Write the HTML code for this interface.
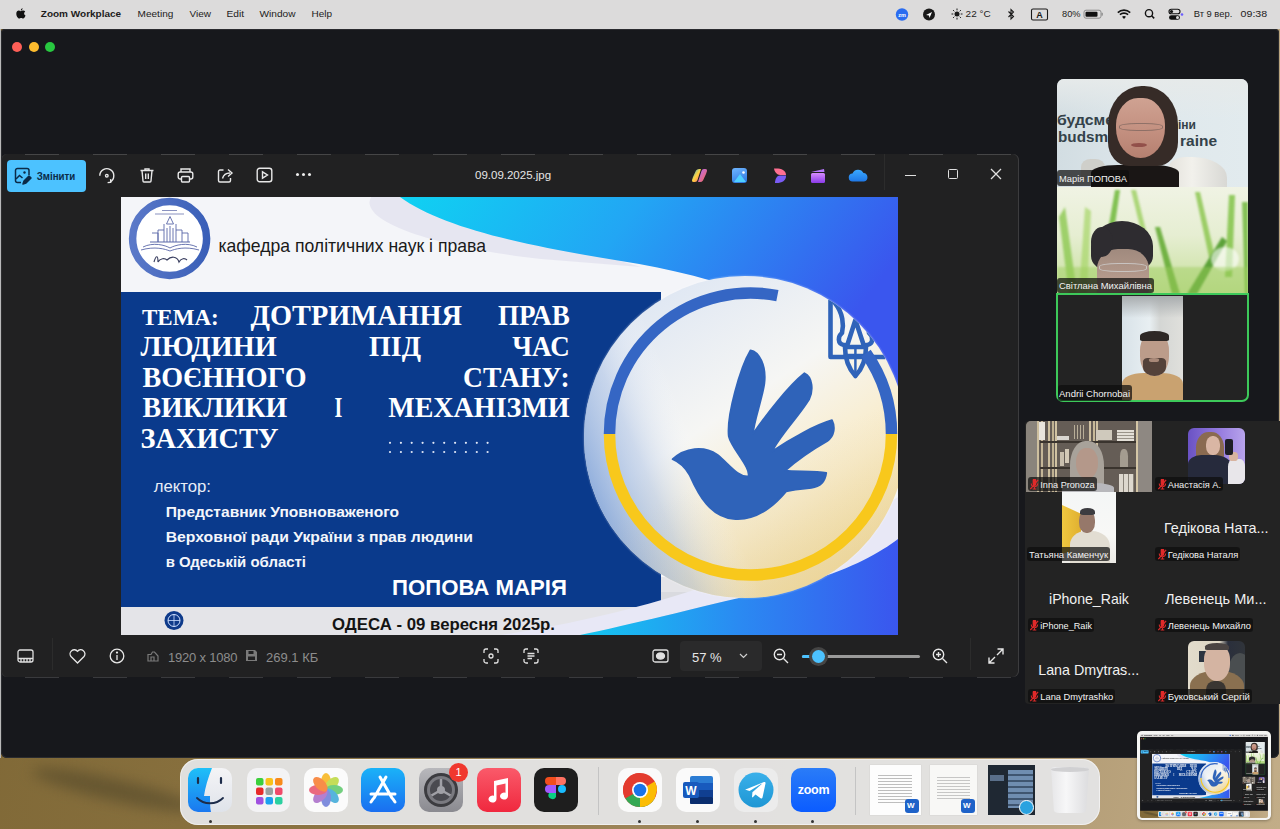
<!DOCTYPE html>
<html><head><meta charset="utf-8">
<style>
*{margin:0;padding:0;box-sizing:border-box}
html,body{width:1280px;height:829px;overflow:hidden;font-family:"Liberation Sans",sans-serif}
body{position:relative;background:linear-gradient(100deg,#7d6634 0%,#8a7240 30%,#a89068 70%,#c2ad88 100%)}
.a{position:absolute}
/* menubar */
#menubar,.cmenubar{left:0;top:0;width:1280px;height:29px;background:#dcdbdb;color:#1d1d1d;font-size:11.5px}
#menubar span,.cmenubar span{position:absolute;top:7px;white-space:nowrap}
/* zoom window */
#zw,.czw{left:1px;top:29px;width:1278px;height:729px;background:#17181c;border-radius:4px 4px 6px 6px;overflow:hidden;box-shadow:inset 0 0 0 1px #2a2b2f}
.tl{position:absolute;width:10px;height:10px;border-radius:50%;top:13px}
/* photos window */
#pw,.cpw{left:1px;top:154px;width:1018px;height:523px;background:#212122;border-radius:6px;overflow:hidden;box-shadow:inset -1px 0 0 #3c3c3e,inset 1px 0 0 #2e2e30}
.bn{color:#f0f0f0;font-size:15.5px;text-align:center;white-space:nowrap}
</style></head>
<body>
<!--SCREEN--><div class="a" style="left:0;top:0;width:1280px;height:829px;overflow:hidden;background:linear-gradient(100deg,#7d6634 0%,#8a7240 30%,#a89068 70%,#c2ad88 100%)">
<div class="a" style="left:0;top:757px;width:180px;height:72px;overflow:hidden"><div class="a" style="left:30px;top:22px;width:170px;height:22px;border-radius:50%;background:rgba(72,64,38,.5);filter:blur(7px);transform:rotate(13deg)"></div></div>
<!-- MENU BAR -->
<div id="menubar" class="a"><svg class="a" style="left:0;top:0" width="1280" height="29" viewBox="0 0 1280 29">
<path d="M20.6,11.2 c0.9,0 1.9,-0.7 2.6,-0.7 c0.8,0 1.5,0.4 2,1 c-1.6,0.9 -1.4,3.4 0.3,4.1 c-0.4,1.2 -1.3,3 -2.4,3 c-0.8,0 -1,-0.5 -1.9,-0.5 c-0.9,0 -1.2,0.5 -2,0.5 c-1.3,0 -2.9,-2.6 -2.9,-4.8 c0,-2.2 1.3,-3.3 2.5,-3.3 c0.7,0 1.3,0.6 1.8,0.7z M20.7,10.6 c-0.1,-1 0.7,-2.2 1.9,-2.4 c0.1,1.1 -0.8,2.3 -1.9,2.4z" fill="#111"/>
<circle cx="902" cy="14.5" r="6.2" fill="#2a6cf0"/><text x="902" y="16.6" font-family="Liberation Sans" font-size="5.5" font-weight="bold" fill="#fff" text-anchor="middle">zm</text>
<circle cx="929" cy="14.5" r="6" fill="#1a1a1a"/><path d="M926,15 L932,12 L929.5,18 L929,15.5Z" fill="#fff"/>
<circle cx="957" cy="14" r="2.5" fill="#1a1a1a"/><g stroke="#1a1a1a" stroke-width="1"><path d="M957,8.5v1.8M957,17.7v1.8M951.5,14h1.8M960.7,14h1.8M953.1,10.1l1.2,1.2M959.7,16.7l1.2,1.2M953.1,17.9l1.2,-1.2M959.7,11.3l1.2,-1.2"/></g>
<path d="M1008.5,11.5 L1013.5,16.5 L1011,19 V9.5 L1013.5,12 L1008.5,17" fill="none" stroke="#1a1a1a" stroke-width="1.1"/>
<rect x="1031.5" y="9" width="16" height="11" rx="1.5" fill="none" stroke="#1a1a1a" stroke-width="1.1"/><text x="1039.5" y="17.8" font-family="Liberation Sans" font-size="9" font-weight="bold" fill="#1a1a1a" text-anchor="middle">A</text>
<rect x="1084" y="10.2" width="17" height="8" rx="2" fill="none" stroke="#8a8a8a" stroke-width="1"/><rect x="1085.5" y="11.7" width="12" height="5" rx="1" fill="#111"/><rect x="1101.5" y="12.8" width="1.3" height="2.8" fill="#8a8a8a"/>
<path d="M1117.8,12.6 a9,9 0 0 1 12.4,0" fill="none" stroke="#111" stroke-width="1.6"/><path d="M1119.9,14.7 a6,6 0 0 1 8.2,0" fill="none" stroke="#111" stroke-width="1.6"/><path d="M1122,16.8 a3,3 0 0 1 4,0 L1124,19Z" fill="#111"/>
<circle cx="1149" cy="13.2" r="3.6" fill="none" stroke="#111" stroke-width="1.4"/><path d="M1151.6,15.8 l2.6,2.6" stroke="#111" stroke-width="1.5"/>
<rect x="1169" y="9.2" width="11" height="4.6" rx="2.3" fill="none" stroke="#111" stroke-width="1.1"/><circle cx="1171.5" cy="11.5" r="1.6" fill="#111"/><rect x="1169" y="15.2" width="11" height="4.6" rx="2.3" fill="#111"/><circle cx="1177.5" cy="17.5" r="1.5" fill="#ddd"/><circle cx="1182" cy="14.5" r="1.3" fill="#6a5cff"/>
<text x="40.8" y="17.3" textLength="80.4" lengthAdjust="spacingAndGlyphs" font-family="Liberation Sans" font-size="9.8" font-weight="bold" fill="#1c1c1c">Zoom Workplace</text><text x="137.6" y="17.3" textLength="35.7" lengthAdjust="spacingAndGlyphs" font-family="Liberation Sans" font-size="9.8" font-weight="normal" fill="#1c1c1c">Meeting</text><text x="189.5" y="17.3" textLength="21.5" lengthAdjust="spacingAndGlyphs" font-family="Liberation Sans" font-size="9.8" font-weight="normal" fill="#1c1c1c">View</text><text x="226.5" y="17.3" textLength="17.5" lengthAdjust="spacingAndGlyphs" font-family="Liberation Sans" font-size="9.8" font-weight="normal" fill="#1c1c1c">Edit</text><text x="259.5" y="17.3" textLength="36.0" lengthAdjust="spacingAndGlyphs" font-family="Liberation Sans" font-size="9.8" font-weight="normal" fill="#1c1c1c">Window</text><text x="311.5" y="17.3" textLength="20.5" lengthAdjust="spacingAndGlyphs" font-family="Liberation Sans" font-size="9.8" font-weight="normal" fill="#1c1c1c">Help</text><text x="965.6" y="17.3" textLength="25.0" lengthAdjust="spacingAndGlyphs" font-family="Liberation Sans" font-size="9.8" font-weight="normal" fill="#1c1c1c">22 °C</text><text x="1062" y="17.3" textLength="18.5" lengthAdjust="spacingAndGlyphs" font-family="Liberation Sans" font-size="9.5" font-weight="normal" fill="#1c1c1c">80%</text><text x="1193.7" y="17.3" textLength="38.6" lengthAdjust="spacingAndGlyphs" font-family="Liberation Sans" font-size="9.8" font-weight="normal" fill="#1c1c1c">Вт 9 вер.</text><text x="1240.6" y="17.3" textLength="26.6" lengthAdjust="spacingAndGlyphs" font-family="Liberation Sans" font-size="9.8" font-weight="normal" fill="#1c1c1c">09:38</text></svg></div>

<div class="a" style="left:0;top:29px;width:1px;height:729px;background:#b9b9b9"></div>
<!-- ZOOM WINDOW -->
<div id="zw" class="a">
  <div class="tl" style="left:11px;background:#fe5f57"></div>
  <div class="tl" style="left:28px;background:#febc2e"></div>
  <div class="tl" style="left:44px;background:#28c840"></div>
</div>

<!-- PHOTOS WINDOW -->
<div id="pw" class="a">
  <!-- top toolbar -->
  <div class="a" style="left:6px;top:6px;width:79px;height:32px;background:#4cc2ff;border-radius:4px"></div>
  <svg class="a" style="left:13px;top:13px" width="18" height="18" viewBox="0 0 18 18" fill="none" stroke="#0b2b48" stroke-width="1.5"><path d="M7,15.5 H3.5 A2,2 0 0 1 1.5,13.5 V3.5 A2,2 0 0 1 3.5,1.5 H13 A2,2 0 0 1 15,3.5 V8"/><circle cx="10.5" cy="5.5" r="1.2" fill="#0b2b48" stroke="none"/><path d="M2,12 L5.5,8.5 L8.5,11"/><path d="M9,17 L10,14 L15,9 L17,11 L12,16 Z" fill="#0b2b48" stroke-linejoin="round"/></svg>
  <svg class="a" style="left:0;top:0;overflow:visible" width="1" height="1"><text x="35.7" y="26" textLength="38.6" lengthAdjust="spacingAndGlyphs" font-family="Liberation Sans" font-weight="bold" font-size="11.5" fill="#0b2b48">Змінити</text></svg>
  <svg class="a" style="left:97px;top:13px" width="18" height="18" viewBox="0 0 18 18" fill="none" stroke="#e8e8e8" stroke-width="1.4"><path d="M1.8,8.7 A7,7 0 1 1 12.3,14.8"/><path d="M9.6,15.6 L12.8,15.3 L12.6,12.1" stroke-linejoin="round"/><circle cx="8.8" cy="8.7" r="1.3"/></svg>
  <svg class="a" style="left:138px;top:13px" width="16" height="16" viewBox="0 0 16 16" fill="none" stroke="#e8e8e8" stroke-width="1.4"><path d="M1.5 3.5h13"/><path d="M6 3.5V2h4v1.5"/><path d="M3 3.5l1 10.5a1 1 0 0 0 1 1h6a1 1 0 0 0 1-1l1-10.5"/><path d="M6.7 6.5v5.5M9.3 6.5v5.5"/></svg>
  <svg class="a" style="left:176px;top:13px" width="17" height="16" viewBox="0 0 17 16" fill="none" stroke="#e8e8e8" stroke-width="1.4"><path d="M4 5V2h9v3"/><rect x="1.2" y="5" width="14.6" height="7" rx="2"/><rect x="4.5" y="9.5" width="8" height="5.5" rx="1" fill="#212122"/></svg>
  <svg class="a" style="left:216px;top:13px" width="17" height="16" viewBox="0 0 17 16" fill="none" stroke="#e8e8e8" stroke-width="1.4"><path d="M6.5 3H3a1.5 1.5 0 0 0-1.5 1.5v9A1.5 1.5 0 0 0 3 15h9a1.5 1.5 0 0 0 1.5-1.5V11"/><path d="M5.5 11.5c1-4 4-5.5 7.5-5.5"/><path d="M11 2.5l4 3.5-4 3.5"/></svg>
  <svg class="a" style="left:255px;top:13px" width="17" height="16" viewBox="0 0 17 16" fill="none" stroke="#e8e8e8" stroke-width="1.4"><rect x="1.2" y="1.2" width="14.6" height="13.6" rx="2.5"/><path d="M6.5 4.8v6.4l5-3.2z"/></svg>
  <div class="a" style="left:295px;top:19px;width:3px;height:3px;border-radius:50%;background:#eee;box-shadow:6px 0 0 #eee,12px 0 0 #eee"></div>
  <div class="a" style="left:474px;top:15px;font-size:11.5px;color:#e6e6e6;white-space:nowrap">09.09.2025.jpg</div>
  <!-- app icons -->
  <svg class="a" style="left:690px;top:14px" width="17" height="15" viewBox="0 0 17 15"><defs><linearGradient id="cp1" x1="0" y1="0" x2="1" y2="1"><stop offset="0" stop-color="#1fb0ff"/><stop offset=".5" stop-color="#ffd23c"/><stop offset="1" stop-color="#ff5a7a"/></linearGradient><linearGradient id="cp2" x1="0" y1="0" x2="1" y2="1"><stop offset="0" stop-color="#b06bff"/><stop offset="1" stop-color="#ff6a4a"/></linearGradient></defs><path d="M2 9L5 2.5Q6 1 8 1h2L6.5 12Q6 14 4 14H2.5Q0.5 14 1 12z" fill="url(#cp1)"/><path d="M15 6l-3 6.5Q11 14 9 14H7L10.5 3Q11 1 13 1h1.5Q16.5 1 16 3z" fill="url(#cp2)"/></svg>
  <div class="a" style="left:731px;top:14px;width:15px;height:15px;border-radius:3px;background:linear-gradient(160deg,#6fb6ff,#2a74e0)"></div>
  <svg class="a" style="left:733px;top:16px" width="12" height="12" viewBox="0 0 12 12"><circle cx="9.5" cy="2.5" r="1.3" fill="#fff"/><path d="M0 12L6 4l6 8z" fill="#4fd0ff"/></svg>
  <svg class="a" style="left:771px;top:13px" width="15" height="17" viewBox="0 0 15 17"><path d="M2,1.5 C8,1 14,2.5 14,8 H8 C5,8 2.5,5 2,1.5Z" fill="#ff6f91"/><path d="M3,16 C9,16.5 14.5,14 14,8.5 H8 C5,8.5 3,12 3,16Z" fill="#7a5cf5"/></svg>
  <svg class="a" style="left:809px;top:13px" width="16" height="17" viewBox="0 0 16 17"><defs><linearGradient id="cc" x1="0" y1="0" x2="0" y2="1"><stop offset="0" stop-color="#d68cff"/><stop offset="1" stop-color="#8a3ae8"/></linearGradient></defs><path d="M1 5l13-3 .5 3z" fill="#b878ff"/><rect x="1" y="6" width="14" height="10" rx="1.5" fill="url(#cc)"/></svg>
  <svg class="a" style="left:847px;top:14px" width="20" height="14" viewBox="0 0 20 14"><defs><linearGradient id="od" x1="0" y1="0" x2="0" y2="1"><stop offset="0" stop-color="#3aa9ff"/><stop offset="1" stop-color="#1f78e6"/></linearGradient></defs><path d="M5 13.5A4 4 0 0 1 4.5 5.5 6 6 0 0 1 15.5 5 4.3 4.3 0 0 1 16 13.5z" fill="url(#od)"/></svg>
  <div class="a" style="left:883px;top:0;width:1px;height:36px;background:#2c2c2c"></div>
  <div class="a" style="left:904px;top:21px;width:11px;height:1.3px;background:#e0e0e0"></div>
  <div class="a" style="left:947px;top:15px;width:10px;height:10px;border:1.3px solid #e0e0e0;border-radius:1.5px"></div>
  <svg class="a" style="left:989px;top:14px" width="12" height="12" viewBox="0 0 12 12" stroke="#e0e0e0" stroke-width="1.3"><path d="M1 1l10 10M11 1L1 11"/></svg>

  <!-- IMAGE -->
  <div id="img" class="a" style="left:120px;top:43px;width:777px;height:438px;overflow:hidden;background:#f3f4f8"><svg class="a" style="left:0;top:0" width="777" height="438" viewBox="0 0 777 438">
<defs>
 <linearGradient id="sw" x1="0" y1="0" x2="1" y2="0.3"><stop offset="0" stop-color="#0fd2f2"/><stop offset="0.45" stop-color="#22a6f4"/><stop offset="1" stop-color="#3a56ee"/></linearGradient>
 <linearGradient id="sw2" x1="0" y1="0" x2="1" y2="0"><stop offset="0" stop-color="#14c8f0"/><stop offset="0.5" stop-color="#2a8af2"/><stop offset="1" stop-color="#3a56ee"/></linearGradient>
 <linearGradient id="cf" x1="0.15" y1="0.1" x2="0.75" y2="1"><stop offset="0" stop-color="#dfe7f3"/><stop offset="0.4" stop-color="#f6f6f4"/><stop offset="0.72" stop-color="#f9ebc6"/><stop offset="1" stop-color="#f8dc90"/></linearGradient>
 <radialGradient id="halo" cx="0.5" cy="0.5" r="0.5"><stop offset="0.93" stop-color="#ffffff"/><stop offset="1" stop-color="#ffffff" stop-opacity="0"/></radialGradient>
 <linearGradient id="shade" x1="0" y1="0.62" x2="0.75" y2="0.3"><stop offset="0" stop-color="#7fa2d8" stop-opacity="0.85"/><stop offset="0.22" stop-color="#a8bfe4" stop-opacity="0.5"/><stop offset="0.45" stop-color="#ffffff" stop-opacity="0"/></linearGradient>
 <linearGradient id="shade2" x1="0.2" y1="0.3" x2="0.5" y2="1"><stop offset="0.5" stop-color="#c8c0b0" stop-opacity="0"/><stop offset="1" stop-color="#c8bca0" stop-opacity="0.25"/></linearGradient>
 <clipPath id="circclip"><circle cx="624" cy="240" r="161"/></clipPath>
 <linearGradient id="lg" x1="0" y1="0" x2="1" y2="0"><stop offset="0" stop-color="#5a78c8"/><stop offset="1" stop-color="#3a5fb8"/></linearGradient>
</defs>
<rect width="777" height="438" fill="#f4f5f9"/>
<path d="M250,0 C238,22 300,48 420,62 L520,70 L279,0 Z" fill="#e6e6f1"/>
<path d="M279,0 C320,30 400,48 500,64 C600,80 700,110 777,200 L777,0 Z" fill="url(#sw)"/>
<path d="M0,95 H540 V410 H0 Z" fill="#0a3a8c"/>
<path d="M0,410 H540 V380 L600,380 L620,438 H0 Z" fill="#e4e4e8"/>
<path d="M540,395 L600,395 L600,425 L540,425 Z" fill="#d9dadf"/>
<path d="M380,438 C500,420 650,380 777,300 L777,342 C760,355 730,372 691,383 C600,405 520,425 459,438 Z" fill="#e8e8f6"/>
<path d="M459,438 C520,425 600,405 691,383 C730,372 760,355 777,342 L777,438 Z" fill="url(#sw2)"/>
<circle cx="624" cy="240" r="163" fill="url(#halo)"/>
<circle cx="624" cy="240" r="161" fill="url(#cf)"/>
<circle cx="624" cy="240" r="161" fill="url(#shade)"/>
<circle cx="624" cy="240" r="161" fill="url(#shade2)"/>
<g clip-path="url(#circclip)">
<g fill="none" stroke="#2f63b9" stroke-width="4.6" stroke-linejoin="round" stroke-linecap="square">
 <path d="M709.5,105 V160 H762"/>
 <path d="M714,106 C722,116 723,128 721,136 C717,139 716,147 723,148"/>
 <path d="M755,106 C747,116 746,128 748,136 C752,139 753,147 746,148"/>
 <path d="M726,149 L734.4,123 L743,149"/>
 <path d="M724,150 C724,164 728,172 734.4,179 C741,172 745,164 745,150 Z"/>
 <path d="M724,158 H745 M734.4,150 V179" stroke-width="2.5"/>
</g>
</g>
<path d="M488.5,237.0 A141,141 0 0 1 656.4,98.6" fill="none" stroke="#3566c4" stroke-width="11.5"/>
<path d="M745.0,156.1 A141,141 0 0 1 770.5,237.0" fill="none" stroke="#3566c4" stroke-width="11.5"/>
<path d="M770.5,237.0 A141,141 0 0 1 488.5,237.0" fill="none" stroke="#f8c81c" stroke-width="11.5"/>
<g transform="translate(539,143) scale(0.2293)"><path d="M55,520 C110,470 190,460 250,500 C300,540 340,600 385,595 C400,560 310,470 300,420 C290,330 350,120 395,45 C430,50 465,110 455,190 C445,260 410,350 405,410 C460,330 560,200 630,145 C665,160 670,220 650,260 C600,340 520,420 490,485 C570,430 680,370 750,350 C765,380 760,420 730,440 C660,480 590,530 545,570 C600,575 680,570 725,580 C720,620 700,640 660,645 C610,650 570,655 550,660 C500,720 420,790 320,780 C220,770 170,680 130,590 C110,555 80,530 55,520 Z" fill="#2f63b9" stroke="#2f63b9" stroke-width="8" stroke-linejoin="round"/></g>
<!-- logo -->
<circle cx="48.6" cy="41.5" r="37" fill="#fff" stroke="url(#lg)" stroke-width="7.5"/>
<g fill="none" stroke="#5a68a8" stroke-width="0.9">
 <path d="M41,13.5 H56 M34,17 H63" stroke="#8a92c0" stroke-width="1.1"/>
 <path d="M49,19.5 L45.5,27 H52.5 Z"/>
 <path d="M43,27 V45 M55,27 V45 M46,31 v14 M49,29 v16 M52,31 v14"/>
 <path d="M37,33 H43 M55,33 H61 M31,36 H37 V45 M61,36 H67 V45 M37,33 V45 M61,33 V45"/>
 <path d="M29,45 H69" stroke-width="1.2"/>
 <path d="M22,50 C32,45 44,48 49,51 C54,48 66,45 76,50 M20,53 C34,49 44,52 49,54 C54,52 64,49 78,53"/>
 <path d="M33,65 C35,58 37,58 37,65 C39,61 44,61 46,63 C50,59 56,59 58,65 C60,61 64,61 66,63" stroke-width="1.2" stroke="#3a3f60"/>
</g>
<!-- globe -->
<circle cx="53" cy="423.5" r="9.5" fill="#0e3a8a"/>
<circle cx="53" cy="423.5" r="6" fill="none" stroke="#cfe0ff" stroke-width="1"/>
<path d="M47,423.5 H59 M53,417.5 V429.5" stroke="#cfe0ff" stroke-width="0.8"/>
<text x="21" y="128" textLength="76.8" lengthAdjust="spacingAndGlyphs" font-family="Liberation Serif" font-size="23" font-weight="bold" fill="#fff" >ТЕМА:</text><text x="129.6" y="128" textLength="211.4" lengthAdjust="spacingAndGlyphs" font-family="Liberation Serif" font-size="29" font-weight="bold" fill="#fff" >ДОТРИМАННЯ</text><text x="377" y="128" textLength="71.69999999999999" lengthAdjust="spacingAndGlyphs" font-family="Liberation Serif" font-size="29" font-weight="bold" fill="#fff" >ПРАВ</text><text x="19.6" y="158.5" textLength="136.1" lengthAdjust="spacingAndGlyphs" font-family="Liberation Serif" font-size="29" font-weight="bold" fill="#fff" >ЛЮДИНИ</text><text x="248" y="158.5" textLength="52" lengthAdjust="spacingAndGlyphs" font-family="Liberation Serif" font-size="29" font-weight="bold" fill="#fff" >ПІД</text><text x="391.3" y="158.5" textLength="57.39999999999998" lengthAdjust="spacingAndGlyphs" font-family="Liberation Serif" font-size="29" font-weight="bold" fill="#fff" >ЧАС</text><text x="21.5" y="189.5" textLength="164.1" lengthAdjust="spacingAndGlyphs" font-family="Liberation Serif" font-size="29" font-weight="bold" fill="#fff" >ВОЄННОГО</text><text x="342" y="189.5" textLength="106.69999999999999" lengthAdjust="spacingAndGlyphs" font-family="Liberation Serif" font-size="29" font-weight="bold" fill="#fff" >СТАНУ:</text><text x="21.5" y="220.3" textLength="144.8" lengthAdjust="spacingAndGlyphs" font-family="Liberation Serif" font-size="29" font-weight="bold" fill="#fff" >ВИКЛИКИ</text><text x="213.6" y="220.3" textLength="7.800000000000011" lengthAdjust="spacingAndGlyphs" font-family="Liberation Serif" font-size="29" font-weight="bold" fill="#fff" >І</text><text x="267.2" y="220.3" textLength="181.5" lengthAdjust="spacingAndGlyphs" font-family="Liberation Serif" font-size="29" font-weight="bold" fill="#fff" >МЕХАНІЗМИ</text><text x="19.6" y="250.5" textLength="138.0" lengthAdjust="spacingAndGlyphs" font-family="Liberation Serif" font-size="29" font-weight="bold" fill="#fff" >ЗАХИСТУ</text>
<circle cx="269.0" cy="245.8" r="1.1" fill="#dfe6f5"/><circle cx="279.9" cy="245.8" r="1.1" fill="#dfe6f5"/><circle cx="290.7" cy="245.8" r="1.1" fill="#dfe6f5"/><circle cx="301.6" cy="245.8" r="1.1" fill="#dfe6f5"/><circle cx="312.4" cy="245.8" r="1.1" fill="#dfe6f5"/><circle cx="323.2" cy="245.8" r="1.1" fill="#dfe6f5"/><circle cx="334.1" cy="245.8" r="1.1" fill="#dfe6f5"/><circle cx="344.9" cy="245.8" r="1.1" fill="#dfe6f5"/><circle cx="355.8" cy="245.8" r="1.1" fill="#dfe6f5"/><circle cx="366.6" cy="245.8" r="1.1" fill="#dfe6f5"/><circle cx="269.0" cy="255.0" r="1.1" fill="#dfe6f5"/><circle cx="279.9" cy="255.0" r="1.1" fill="#dfe6f5"/><circle cx="290.7" cy="255.0" r="1.1" fill="#dfe6f5"/><circle cx="301.6" cy="255.0" r="1.1" fill="#dfe6f5"/><circle cx="312.4" cy="255.0" r="1.1" fill="#dfe6f5"/><circle cx="323.2" cy="255.0" r="1.1" fill="#dfe6f5"/><circle cx="334.1" cy="255.0" r="1.1" fill="#dfe6f5"/><circle cx="344.9" cy="255.0" r="1.1" fill="#dfe6f5"/><circle cx="355.8" cy="255.0" r="1.1" fill="#dfe6f5"/><circle cx="366.6" cy="255.0" r="1.1" fill="#dfe6f5"/>
<text x="97.4" y="54.5" textLength="267.6" lengthAdjust="spacingAndGlyphs" font-family="Liberation Sans" font-size="19" font-weight="normal" fill="#1a1a1a" >кафедра політичних наук і права</text><text x="32.7" y="295" textLength="57.3" lengthAdjust="spacingAndGlyphs" font-family="Liberation Sans" font-size="16.5" font-weight="normal" fill="#e8edf7" >лектор:</text><text x="44.7" y="320" textLength="233.3" lengthAdjust="spacingAndGlyphs" font-family="Liberation Sans" font-size="15.5" font-weight="bold" fill="#f4f6fb" >Представник Уповноваженого</text><text x="44.7" y="345" textLength="307.3" lengthAdjust="spacingAndGlyphs" font-family="Liberation Sans" font-size="15.5" font-weight="bold" fill="#f4f6fb" >Верховної ради України  з прав людини</text><text x="44.7" y="370" textLength="140.3" lengthAdjust="spacingAndGlyphs" font-family="Liberation Sans" font-size="15.5" font-weight="bold" fill="#f4f6fb" >в Одеській області</text><text x="271" y="398" textLength="175" lengthAdjust="spacingAndGlyphs" font-family="Liberation Sans" font-size="22" font-weight="bold" fill="#fff" >ПОПОВА МАРІЯ</text><text x="211" y="432.5" textLength="223" lengthAdjust="spacingAndGlyphs" font-family="Liberation Sans" font-size="16.5" font-weight="bold" fill="#141414" >ОДЕСА - 09 вересня 2025р.</text>
</svg></div>

  <!-- bottom bar -->
  <svg class="a" style="left:16px;top:495px" width="17" height="14" viewBox="0 0 17 14" fill="none" stroke="#e0e0e0" stroke-width="1.3"><rect x="1" y="1" width="15" height="12" rx="2"/><path d="M1 9.5h15M4 9.5v3.5M7 9.5v3.5M10 9.5v3.5M13 9.5v3.5"/></svg>
  <div class="a" style="left:51px;top:484px;width:1px;height:32px;background:#2c2c2c"></div>
  <svg class="a" style="left:68px;top:495px" width="17" height="15" viewBox="0 0 17 15" fill="none" stroke="#e6e6e6" stroke-width="1.3"><path d="M8.5 14L2 7.5A3.8 3.8 0 0 1 8.5 2.3 3.8 3.8 0 0 1 15 7.5z"/></svg>
  <svg class="a" style="left:108px;top:494px" width="16" height="16" viewBox="0 0 16 16" fill="none" stroke="#e6e6e6" stroke-width="1.3"><circle cx="8" cy="8" r="6.8"/><path d="M8 7v5"/><circle cx="8" cy="4.6" r=".5" fill="#e6e6e6"/></svg>
  <svg class="a" style="left:145px;top:496px" width="13" height="12" viewBox="0 0 13 12" fill="none" stroke="#7a7a7a" stroke-width="1.2"><path d="M2 11V4.5h3l1.5-2.5h2L12 6v5z"/><path d="M5 11V7h3v4"/></svg>
  <div class="a" style="left:167px;top:496px;font-size:13px;color:#8d8d8d;white-space:nowrap;letter-spacing:-0.2px">1920 x 1080</div>
  <svg class="a" style="left:245px;top:496px" width="11" height="11" viewBox="0 0 11 11"><path d="M0 0h9l2 2v9H0z" fill="#7a7a7a"/><rect x="2.5" y="1" width="5" height="3" fill="#212122"/><rect x="2" y="6.5" width="7" height="3.5" fill="#212122"/></svg>
  <div class="a" style="left:265px;top:496px;font-size:13px;color:#8d8d8d;white-space:nowrap">269.1 КБ</div>
  <svg class="a" style="left:482px;top:494px" width="16" height="16" viewBox="0 0 16 16" fill="none" stroke="#e0e0e0" stroke-width="1.3"><path d="M1 5V3a2 2 0 0 1 2-2h2M11 1h2a2 2 0 0 1 2 2v2M15 11v2a2 2 0 0 1-2 2h-2M5 15H3a2 2 0 0 1-2-2v-2"/><circle cx="8" cy="8" r="2"/></svg>
  <svg class="a" style="left:522px;top:494px" width="16" height="16" viewBox="0 0 16 16" fill="none" stroke="#e0e0e0" stroke-width="1.3"><path d="M1 5V3a2 2 0 0 1 2-2h2M11 1h2a2 2 0 0 1 2 2v2M15 11v2a2 2 0 0 1-2 2h-2M5 15H3a2 2 0 0 1-2-2v-2"/><path d="M4.5 5.5h7M4.5 8h7M4.5 10.5h4.5"/></svg>
  <svg class="a" style="left:651px;top:495px" width="17" height="14" viewBox="0 0 17 14" fill="none" stroke="#e0e0e0" stroke-width="1.3"><rect x="1" y="1" width="15" height="12" rx="2"/><ellipse cx="8.5" cy="7" rx="4" ry="3" fill="#e0e0e0"/></svg>
  <div class="a" style="left:679px;top:487px;width:82px;height:30px;border-radius:4px;background:#2a2a2b"></div>
  <div class="a" style="left:691px;top:496px;font-size:13px;color:#e6e6e6;white-space:nowrap">57 %</div>
  <svg class="a" style="left:738px;top:499px" width="9" height="6" viewBox="0 0 9 6" fill="none" stroke="#cfcfcf" stroke-width="1.2"><path d="M1 1l3.5 3.5L8 1"/></svg>
  <svg class="a" style="left:772px;top:494px" width="16" height="16" viewBox="0 0 16 16" fill="none" stroke="#e6e6e6" stroke-width="1.4"><circle cx="6.5" cy="6.5" r="5.2"/><path d="M10.5 10.5L15 15M4 6.5h5"/></svg>
  <div class="a" style="left:801px;top:501px;width:118px;height:3px;border-radius:2px;background:#9a9a9a"></div>
  <div class="a" style="left:801px;top:501px;width:15px;height:3px;border-radius:2px;background:#4cc2ff"></div>
  <div class="a" style="left:808px;top:493px;width:19px;height:19px;border-radius:50%;background:#454545"></div>
  <div class="a" style="left:811px;top:496px;width:13px;height:13px;border-radius:50%;background:#4cc2ff"></div>
  <svg class="a" style="left:931px;top:494px" width="16" height="16" viewBox="0 0 16 16" fill="none" stroke="#e6e6e6" stroke-width="1.4"><circle cx="6.5" cy="6.5" r="5.2"/><path d="M10.5 10.5L15 15M4 6.5h5M6.5 4v5"/></svg>
  <div class="a" style="left:969px;top:484px;width:1px;height:32px;background:#2c2c2c"></div>
  <svg class="a" style="left:987px;top:494px" width="16" height="16" viewBox="0 0 16 16" fill="none" stroke="#e6e6e6" stroke-width="1.4"><path d="M9.5 1H15v5.5M15 1L9 7M6.5 15H1V9.5M1 15l6-6"/></svg>
</div>

<div class="a" style="left:1px;top:154px;width:1018px;height:1px;background:repeating-linear-gradient(90deg,transparent 0 24px,#8a8a8a 24px 58px,transparent 58px 68px);opacity:.35"></div>
<div class="a" style="left:1px;top:677px;width:1018px;height:1px;background:repeating-linear-gradient(90deg,transparent 0 24px,#8a8a8a 24px 58px,transparent 58px 68px);opacity:.3"></div>
<!--PARTS-->
<!-- TOP VIDEO TILES -->
<div class="a" style="left:1057px;top:79px;width:191px;height:108px;border-radius:7px 7px 0 0;overflow:hidden;background:linear-gradient(90deg,#d2dde2 0%,#dfe8ec 50%,#e2ebee 100%)">
  <div class="a" style="left:0;top:0;width:191px;height:40px;background:linear-gradient(180deg,#e6eaea,rgba(223,231,234,0))"></div>
  <svg class="a" style="left:0;top:0" width="191" height="108" viewBox="0 0 191 108" font-family="Liberation Sans" font-weight="bold" fill="#34424a">
   <text x="0" y="46" textLength="57" lengthAdjust="spacingAndGlyphs" font-size="15.5">будсме</text>
   <text x="121" y="50" textLength="18" lengthAdjust="spacingAndGlyphs" font-size="13">іни</text>
   <text x="1" y="63" textLength="50" lengthAdjust="spacingAndGlyphs" font-size="15.5">budsm</text>
   <text x="123" y="67" textLength="37" lengthAdjust="spacingAndGlyphs" font-size="14">raine</text>
  </svg>
  <div class="a" style="left:24px;top:80px;width:24px;height:20px;border-radius:40% 40% 0 0;background:#cfcfca"></div>
  <div class="a" style="left:112px;top:78px;width:58px;height:34px;border-radius:30% 60% 0 0;background:linear-gradient(90deg,#e4e2dc,#f2f1ec 40%,#d8d8d4)"></div>
  <div class="a" style="left:34px;top:86px;width:88px;height:26px;background:#1a1615;border-radius:30% 30% 0 0"></div>
  <div class="a" style="left:51px;top:7px;width:70px;height:80px;border-radius:48% 48% 30% 30%;background:#362b27"></div>
  <div class="a" style="left:59px;top:19px;width:49px;height:60px;border-radius:45% 45% 50% 50%;background:linear-gradient(180deg,#cfa292,#c28e7e 60%,#b58070)"></div>
  <div class="a" style="left:62px;top:44px;width:44px;height:8px;border:1px solid #6a5a55;border-radius:40%;opacity:.6"></div>
  <div class="a" style="left:74px;top:64px;width:16px;height:4px;border-radius:50%;background:#92504a"></div>
</div>
<div class="a" style="left:1057px;top:187px;width:191px;height:107px;overflow:hidden;background:linear-gradient(180deg,#f0f3e4 0%,#e6eed2 45%,#c6df9a 100%)">
  <svg class="a" style="left:0;top:0;filter:blur(0.8px)" width="191" height="107" viewBox="0 0 191 107">
   <path d="M2,30 L12,107 L20,107 L8,20Z" fill="#8cc850" opacity=".8"/>
   <path d="M28,20 L22,107 L30,107 L34,24Z" fill="#a6d668" opacity=".7"/>
   <path d="M58,3 L40,107 L48,107 L63,3Z" fill="#6fb83a" opacity=".85"/>
   <path d="M74,3 L88,60 L93,60 L79,3Z" fill="#9ccf60" opacity=".8"/>
   <path d="M98,40 L115,107 L123,107 L103,40Z" fill="#5fa82e" opacity=".85"/>
   <path d="M138,5 L152,70 L158,70 L143,5Z" fill="#88c44a" opacity=".8"/>
   <path d="M165,50 L130,107 L140,107 L170,54Z" fill="#4e9a2a" opacity=".9"/>
   <path d="M172,8 L168,90 L175,90 L178,8Z" fill="#7cc040" opacity=".8"/>
   <path d="M185,15 L188,107 L191,107 L191,15Z" fill="#6ab436" opacity=".8"/>
   <ellipse cx="168" cy="72" rx="14" ry="12" fill="#ffffff" opacity=".6"/>
   <rect x="0" y="80" width="191" height="27" fill="#9ccc5c" opacity=".45"/>
  </svg>
  <div class="a" style="left:34px;top:34px;width:62px;height:50px;border-radius:50% 50% 30% 30%;background:#2e2c30"></div>
  <div class="a" style="left:40px;top:62px;width:52px;height:50px;border-radius:40% 40% 20% 20%;background:linear-gradient(180deg,#a08a7e,#c3a596)"></div>
  <div class="a" style="left:42px;top:76px;width:48px;height:9px;border:1px solid #d0d0d0;border-radius:40%;opacity:.8"></div>
  <div class="a" style="left:34px;top:40px;width:22px;height:30px;border-radius:50%;background:#2e2c30"></div>
</div>
<div class="a" style="left:1056px;top:293px;width:193px;height:109px;border:2px solid #3dc95a;border-radius:0 0 7px 7px;background:#232323;overflow:hidden">
  <div class="a" style="left:64px;top:1px;width:61px;height:105px;background:linear-gradient(90deg,#d8e2e8 0%,#e8eff2 45%,#d4d6d4 62%,#e0e0dc 100%)"></div>
  <div class="a" style="left:64px;top:1px;width:61px;height:22px;background:linear-gradient(180deg,#a8acae,rgba(200,204,206,0))"></div>
  <div class="a" style="left:64px;top:78px;width:61px;height:30px;border-radius:35% 35% 0 0;background:#c9a270"></div>
  <div class="a" style="left:82px;top:37px;width:29px;height:44px;border-radius:42% 42% 45% 45%;background:#bc9c8a"></div>
  <div class="a" style="left:82px;top:36px;width:29px;height:10px;border-radius:50% 50% 15% 15%;background:#2e2826"></div>
  <div class="a" style="left:85px;top:63px;width:23px;height:18px;border-radius:20% 20% 50% 50%;background:#54423a"></div>
  <div class="a" style="left:91px;top:63px;width:10px;height:4px;border-radius:40%;background:#a88878"></div>
</div>
</div>
<!-- GALLERY -->
<div class="a" style="left:1025px;top:421px;width:255px;height:283px;background:#232323;border-radius:4px 0 0 4px"></div>
<!-- Inna -->
<div class="a" style="left:1026px;top:421px;width:126px;height:71px;overflow:hidden;border-radius:5px 0 0 0;background:#655d56">
  <div class="a" style="left:0;top:0;width:11px;height:71px;background:#8a847c"></div>
  <div class="a" style="left:112px;top:0;width:14px;height:71px;background:#8e8882"></div>
  <div class="a" style="left:11px;top:0;width:2px;height:71px;background:#cdbf9f;box-shadow:4px 0 0 #c4b698,11px 0 0 #cdbf9f,15px 0 0 #bfb192,18px 0 0 #d0c2a2,52px 0 0 #cdbf9f,56px 0 0 #c6b898,59px 0 0 #cdbf9f,99px 0 0 #d4c6a6"></div>
  <div class="a" style="left:13px;top:1px;width:6px;height:18px;background:#e8e4dc"></div>
  <div class="a" style="left:31px;top:15px;width:12px;height:4px;background:#d9d6d0"></div>
  <div class="a" style="left:48px;top:4px;width:12px;height:14px;background:repeating-linear-gradient(90deg,#b8ae98 0 1px,transparent 1px 3px)"></div>
  <div class="a" style="left:70px;top:9px;width:16px;height:10px;background:#cfc9bc"></div>
  <div class="a" style="left:91px;top:9px;width:17px;height:11px;background:repeating-linear-gradient(180deg,#e4e0d8 0 2px,#9a948a 2px 3px)"></div>
  <div class="a" style="left:14px;top:20px;width:96px;height:2px;background:#3a342e"></div>
  <div class="a" style="left:14px;top:46px;width:96px;height:2px;background:#3a342e"></div>
  <div class="a" style="left:34px;top:31px;width:4px;height:14px;background:#c9bfae;box-shadow:5px -3px 0 #d4cab8"></div>
  <div class="a" style="left:94px;top:28px;width:8px;height:18px;border-radius:40% 40% 0 0;background:#a49c90"></div>
  <div class="a" style="left:93px;top:53px;width:15px;height:18px;background:repeating-linear-gradient(90deg,#ddd8ce 0 4px,#8a847a 4px 5px)"></div>
  <div class="a" style="left:44px;top:20px;width:34px;height:54px;border-radius:45% 45% 20% 20%;background:#a8a29a"></div>
  <div class="a" style="left:50px;top:27px;width:22px;height:31px;border-radius:45% 45% 50% 50%;background:#b4988a"></div>
  <div class="a" style="left:36px;top:62px;width:52px;height:12px;border-radius:40% 40% 0 0;background:#b8b8bc"></div>
</div>
<!-- Anastasia -->
<div class="a" style="left:1188px;top:428px;width:57px;height:56px;border-radius:6px;overflow:hidden;background:linear-gradient(90deg,#6a52c4,#9a80e0 60%,#b8a4ec)">
  <div class="a" style="left:8px;top:4px;width:28px;height:34px;border-radius:45% 45% 30% 30%;background:#8a6a50"></div>
  <div class="a" style="left:18px;top:8px;width:14px;height:19px;border-radius:45%;background:#d9b6a4"></div>
  <div class="a" style="left:0;top:27px;width:44px;height:30px;border-radius:30% 40% 0 0;background:#262a3c"></div>
  <div class="a" style="left:40px;top:31px;width:17px;height:26px;border-radius:30% 30% 0 0;background:#e8e6ea"></div>
  <div class="a" style="left:41px;top:24px;width:9px;height:9px;border-radius:40%;background:#d8b4a0"></div>
  <div class="a" style="left:37px;top:11px;width:8px;height:16px;border-radius:2px;background:#1e1e26"></div>
</div>
<!-- Tatyana -->
<div class="a" style="left:1062px;top:492px;width:54px;height:71px;overflow:hidden;background:linear-gradient(180deg,#f4f6f6,#f8f8f6 60%,#ecebe6)">
  <div class="a" style="left:0;top:13px;width:19px;height:48px;background:linear-gradient(90deg,#f0c840,#e0b030);clip-path:polygon(0 0,100% 18%,100% 100%,0 100%)"></div>
  <div class="a" style="left:8px;top:39px;width:40px;height:34px;border-radius:40% 45% 0 0;background:#e2ddd2"></div>
  <div class="a" style="left:17px;top:18px;width:16px;height:23px;border-radius:45%;background:#96786a"></div>
  <div class="a" style="left:18px;top:16px;width:15px;height:7px;border-radius:50% 50% 20% 20%;background:#3c3c40"></div>
</div>
<!-- Bukovsky -->
<div class="a" style="left:1188px;top:641px;width:57px;height:60px;border-radius:6px;overflow:hidden;background:linear-gradient(90deg,#e2dccc 0%,#ddd6c4 55%,#2a2f3c 70%,#30343a 100%)">
  <div class="a" style="left:11px;top:10px;width:7px;height:11px;background:#2c3440"></div>
  <div class="a" style="left:40px;top:12px;width:24px;height:40px;border-radius:50%;background:#4a4e50"></div>
  <div class="a" style="left:2px;top:30px;width:54px;height:32px;border-radius:45% 45% 0 0;background:#8a7050"></div>
  <div class="a" style="left:18px;top:40px;width:20px;height:22px;border-radius:40% 40% 0 0;background:#3a3632"></div>
  <div class="a" style="left:16px;top:4px;width:26px;height:36px;border-radius:40% 40% 48% 48%;background:#d4b4a2"></div>
  <div class="a" style="left:17px;top:2px;width:24px;height:7px;border-radius:50% 50% 10% 10%;background:#4a4442"></div>
</div>
<!-- big names -->
<svg class="a" style="left:0;top:0;overflow:visible" width="1" height="1"><text x="1164" y="532.6" textLength="104.6" lengthAdjust="spacingAndGlyphs" font-family="Liberation Sans" font-size="15" fill="#f0f0f0">Гедікова Ната...</text></svg>
<svg class="a" style="left:0;top:0;overflow:visible" width="1" height="1"><text x="1049" y="603.9" textLength="79.9" lengthAdjust="spacingAndGlyphs" font-family="Liberation Sans" font-size="15" fill="#f0f0f0">iPhone_Raik</text></svg>
<svg class="a" style="left:0;top:0;overflow:visible" width="1" height="1"><text x="1165" y="603.9" textLength="101.5" lengthAdjust="spacingAndGlyphs" font-family="Liberation Sans" font-size="15" fill="#f0f0f0">Левенець Ми...</text></svg>
<svg class="a" style="left:0;top:0;overflow:visible" width="1" height="1"><text x="1038.2" y="674.9" textLength="101.0" lengthAdjust="spacingAndGlyphs" font-family="Liberation Sans" font-size="15" fill="#f0f0f0">Lana Dmytras...</text></svg>
<!-- LABELS -->
<div class="a" style="left:1057px;top:170px;width:72px;height:16px;background:rgba(14,14,14,0.72);border-radius:3px"></div><svg class="a" style="left:0;top:0;overflow:visible" width="1" height="1"><text x="1059" y="181.6" textLength="68.0" lengthAdjust="spacingAndGlyphs" font-family="Liberation Sans" font-size="9.6" fill="#f2f2f2" font-weight="500">Марія ПОПОВА</text></svg>
<div class="a" style="left:1057px;top:278px;width:97px;height:15px;background:rgba(14,14,14,0.72);border-radius:3px"></div><svg class="a" style="left:0;top:0;overflow:visible" width="1" height="1"><text x="1059" y="289.1" textLength="93.0" lengthAdjust="spacingAndGlyphs" font-family="Liberation Sans" font-size="9.6" fill="#f2f2f2" font-weight="500">Світлана Михайлівна</text></svg>
<div class="a" style="left:1058px;top:385px;width:74px;height:16px;background:rgba(14,14,14,0.72);border-radius:3px"></div><svg class="a" style="left:0;top:0;overflow:visible" width="1" height="1"><text x="1059" y="396.6" textLength="71.0" lengthAdjust="spacingAndGlyphs" font-family="Liberation Sans" font-size="9.6" fill="#f2f2f2" font-weight="500">Andrii Chornobai</text></svg>
<div class="a" style="left:1028px;top:477px;width:69px;height:14px;background:rgba(14,14,14,0.72);border-radius:3px"></div><svg class="a" style="left:1029.3px;top:479px" width="10" height="11" viewBox="0 0 10 12"><path d="M3.5,1.5 a2,2 0 0 1 4,0 v4 a2,2 0 0 1 -4,0z" fill="#e02a2a"/><path d="M2,5 a3.5,3.5 0 0 0 7,0 M5.5,9 v2 M3.5,11 h4" stroke="#e02a2a" stroke-width="1.1" fill="none"/><path d="M1,11 L9.5,1" stroke="#e02a2a" stroke-width="1.3"/></svg><svg class="a" style="left:0;top:0;overflow:visible" width="1" height="1"><text x="1040.3" y="487.6" textLength="54.4" lengthAdjust="spacingAndGlyphs" font-family="Liberation Sans" font-size="9.6" fill="#f2f2f2" font-weight="500">Inna Pronoza</text></svg>
<div class="a" style="left:1155px;top:477px;width:68px;height:14px;background:rgba(14,14,14,0.72);border-radius:3px"></div><svg class="a" style="left:1156.8px;top:479px" width="10" height="11" viewBox="0 0 10 12"><path d="M3.5,1.5 a2,2 0 0 1 4,0 v4 a2,2 0 0 1 -4,0z" fill="#e02a2a"/><path d="M2,5 a3.5,3.5 0 0 0 7,0 M5.5,9 v2 M3.5,11 h4" stroke="#e02a2a" stroke-width="1.1" fill="none"/><path d="M1,11 L9.5,1" stroke="#e02a2a" stroke-width="1.3"/></svg><svg class="a" style="left:0;top:0;overflow:visible" width="1" height="1"><text x="1167.8" y="487.6" textLength="53.2" lengthAdjust="spacingAndGlyphs" font-family="Liberation Sans" font-size="9.6" fill="#f2f2f2" font-weight="500">Анастасія А.</text></svg>
<div class="a" style="left:1027px;top:547px;width:83px;height:14px;background:rgba(14,14,14,0.72);border-radius:3px"></div><svg class="a" style="left:0;top:0;overflow:visible" width="1" height="1"><text x="1029" y="557.6" textLength="79.0" lengthAdjust="spacingAndGlyphs" font-family="Liberation Sans" font-size="9.6" fill="#f2f2f2" font-weight="500">Татьяна Каменчук</text></svg>
<div class="a" style="left:1155px;top:547px;width:85px;height:14px;background:rgba(14,14,14,0.72);border-radius:3px"></div><svg class="a" style="left:1156.8px;top:549px" width="10" height="11" viewBox="0 0 10 12"><path d="M3.5,1.5 a2,2 0 0 1 4,0 v4 a2,2 0 0 1 -4,0z" fill="#e02a2a"/><path d="M2,5 a3.5,3.5 0 0 0 7,0 M5.5,9 v2 M3.5,11 h4" stroke="#e02a2a" stroke-width="1.1" fill="none"/><path d="M1,11 L9.5,1" stroke="#e02a2a" stroke-width="1.3"/></svg><svg class="a" style="left:0;top:0;overflow:visible" width="1" height="1"><text x="1167.8" y="557.6" textLength="70.4" lengthAdjust="spacingAndGlyphs" font-family="Liberation Sans" font-size="9.6" fill="#f2f2f2" font-weight="500">Гедікова Наталя</text></svg>
<div class="a" style="left:1028px;top:618px;width:66px;height:14px;background:rgba(14,14,14,0.72);border-radius:3px"></div><svg class="a" style="left:1029.3px;top:620px" width="10" height="11" viewBox="0 0 10 12"><path d="M3.5,1.5 a2,2 0 0 1 4,0 v4 a2,2 0 0 1 -4,0z" fill="#e02a2a"/><path d="M2,5 a3.5,3.5 0 0 0 7,0 M5.5,9 v2 M3.5,11 h4" stroke="#e02a2a" stroke-width="1.1" fill="none"/><path d="M1,11 L9.5,1" stroke="#e02a2a" stroke-width="1.3"/></svg><svg class="a" style="left:0;top:0;overflow:visible" width="1" height="1"><text x="1040.3" y="628.6" textLength="51.7" lengthAdjust="spacingAndGlyphs" font-family="Liberation Sans" font-size="9.6" fill="#f2f2f2" font-weight="500">iPhone_Raik</text></svg>
<div class="a" style="left:1155px;top:618px;width:98px;height:14px;background:rgba(14,14,14,0.72);border-radius:3px"></div><svg class="a" style="left:1156.8px;top:620px" width="10" height="11" viewBox="0 0 10 12"><path d="M3.5,1.5 a2,2 0 0 1 4,0 v4 a2,2 0 0 1 -4,0z" fill="#e02a2a"/><path d="M2,5 a3.5,3.5 0 0 0 7,0 M5.5,9 v2 M3.5,11 h4" stroke="#e02a2a" stroke-width="1.1" fill="none"/><path d="M1,11 L9.5,1" stroke="#e02a2a" stroke-width="1.3"/></svg><svg class="a" style="left:0;top:0;overflow:visible" width="1" height="1"><text x="1167.8" y="628.6" textLength="83.2" lengthAdjust="spacingAndGlyphs" font-family="Liberation Sans" font-size="9.6" fill="#f2f2f2" font-weight="500">Левенець Михайло</text></svg>
<div class="a" style="left:1028px;top:689px;width:87px;height:14px;background:rgba(14,14,14,0.72);border-radius:3px"></div><svg class="a" style="left:1029.3px;top:691px" width="10" height="11" viewBox="0 0 10 12"><path d="M3.5,1.5 a2,2 0 0 1 4,0 v4 a2,2 0 0 1 -4,0z" fill="#e02a2a"/><path d="M2,5 a3.5,3.5 0 0 0 7,0 M5.5,9 v2 M3.5,11 h4" stroke="#e02a2a" stroke-width="1.1" fill="none"/><path d="M1,11 L9.5,1" stroke="#e02a2a" stroke-width="1.3"/></svg><svg class="a" style="left:0;top:0;overflow:visible" width="1" height="1"><text x="1040.3" y="699.6" textLength="73.0" lengthAdjust="spacingAndGlyphs" font-family="Liberation Sans" font-size="9.6" fill="#f2f2f2" font-weight="500">Lana Dmytrashko</text></svg>
<div class="a" style="left:1155px;top:689px;width:97px;height:14px;background:rgba(14,14,14,0.72);border-radius:3px"></div><svg class="a" style="left:1156.8px;top:691px" width="10" height="11" viewBox="0 0 10 12"><path d="M3.5,1.5 a2,2 0 0 1 4,0 v4 a2,2 0 0 1 -4,0z" fill="#e02a2a"/><path d="M2,5 a3.5,3.5 0 0 0 7,0 M5.5,9 v2 M3.5,11 h4" stroke="#e02a2a" stroke-width="1.1" fill="none"/><path d="M1,11 L9.5,1" stroke="#e02a2a" stroke-width="1.3"/></svg><svg class="a" style="left:0;top:0;overflow:visible" width="1" height="1"><text x="1167.8" y="699.6" textLength="82.2" lengthAdjust="spacingAndGlyphs" font-family="Liberation Sans" font-size="9.6" fill="#f2f2f2" font-weight="500">Буковський Сергій</text></svg>
<!-- DOCK -->
<div class="a" style="left:180px;top:759px;width:920px;height:66px;border-radius:18px;background:rgba(228,228,228,0.96);box-shadow:inset 0 0 0 1px rgba(255,255,255,0.5)"></div>
<!-- finder -->
<div class="a" style="left:188px;top:768px;width:44px;height:44px;border-radius:10px;overflow:hidden;background:linear-gradient(180deg,#f4f4f6,#dfe3ea)">
  <svg class="a" style="left:0;top:0" width="44" height="44" viewBox="0 0 44 44"><defs><linearGradient id="fb" x1="0" y1="0" x2="0" y2="1"><stop offset="0" stop-color="#1fc0f8"/><stop offset="1" stop-color="#1a78f0"/></linearGradient></defs><path d="M0,0 H24 C20,10 17,20 16,28 H22 C22,34 22,40 23,44 H0 Z" fill="url(#fb)"/><path d="M10,10 v5 M33,10 v5" stroke="#1d2c4a" stroke-width="2.2" stroke-linecap="round"/><path d="M9,30 C16,37 28,37 35,30" stroke="#1d2c4a" stroke-width="1.8" fill="none" stroke-linecap="round"/></svg>
</div>
<!-- launchpad -->
<div class="a" style="left:247px;top:768px;width:43px;height:44px;border-radius:10px;background:#f3f3f5">
  <svg class="a" style="left:0;top:0" width="43" height="44" viewBox="0 0 43 44">
   <rect x="9" y="10" width="7.5" height="7.5" rx="2" fill="#3ccf3c"/><rect x="18.5" y="10" width="7.5" height="7.5" rx="2" fill="#f8c21a"/><rect x="28" y="10" width="7.5" height="7.5" rx="2" fill="#f88a1a"/>
   <rect x="9" y="19.5" width="7.5" height="7.5" rx="2" fill="#e82a2a"/><rect x="18.5" y="19.5" width="7.5" height="7.5" rx="2" fill="#9aa0a0"/><rect x="28" y="19.5" width="7.5" height="7.5" rx="2" fill="#f04a6a"/>
   <rect x="9" y="29" width="7.5" height="7.5" rx="2" fill="#a050e0"/><rect x="18.5" y="29" width="7.5" height="7.5" rx="2" fill="#1aa0f0"/><rect x="28" y="29" width="7.5" height="7.5" rx="2" fill="#2ad0a0"/>
  </svg>
</div>
<!-- photos -->
<div class="a" style="left:304px;top:768px;width:44px;height:44px;border-radius:10px;background:#fbfbfb">
  <svg class="a" style="left:0;top:0" width="44" height="44" viewBox="0 0 44 44">
   <g transform="translate(22,22)" opacity="0.85">
    <ellipse rx="5" ry="9" cy="-8" fill="#f8b418"/>
    <ellipse rx="5" ry="9" cy="-8" fill="#bcd83c" transform="rotate(45)"/>
    <ellipse rx="5" ry="9" cy="-8" fill="#5cc86a" transform="rotate(90)"/>
    <ellipse rx="5" ry="9" cy="-8" fill="#3aa8d8" transform="rotate(135)"/>
    <ellipse rx="5" ry="9" cy="-8" fill="#6a7ad8" transform="rotate(180)"/>
    <ellipse rx="5" ry="9" cy="-8" fill="#a86ac8" transform="rotate(225)"/>
    <ellipse rx="5" ry="9" cy="-8" fill="#e8506a" transform="rotate(270)"/>
    <ellipse rx="5" ry="9" cy="-8" fill="#f87a2a" transform="rotate(315)"/>
   </g>
  </svg>
</div>
<!-- app store -->
<div class="a" style="left:361px;top:768px;width:44px;height:44px;border-radius:10px;background:linear-gradient(180deg,#1ab2f8,#1a6ef0)">
  <svg class="a" style="left:0;top:0" width="44" height="44" viewBox="0 0 44 44" stroke="#fff" stroke-width="3" stroke-linecap="round" fill="none"><path d="M25,9 L13,30 M19,9 L31,30 M10,26 H34"/><path d="M10,34 l2,-3 M34,34 l-2,-3"/></svg>
</div>
<!-- settings -->
<div class="a" style="left:419px;top:768px;width:44px;height:44px;border-radius:10px;background:linear-gradient(180deg,#b8b8bc,#8a8a90)">
  <svg class="a" style="left:0;top:0" width="44" height="44" viewBox="0 0 44 44"><circle cx="22" cy="22" r="17" fill="#3c3c40"/><circle cx="22" cy="22" r="14" fill="#7a7a80"/><circle cx="22" cy="22" r="11" fill="#4a4a50"/><circle cx="22" cy="22" r="4" fill="#a0a0a6"/><path d="M22,22 V11 M22,22 L12.5,27.5 M22,22 L31.5,27.5" stroke="#a0a0a6" stroke-width="2.5"/></svg>
</div>
<div class="a" style="left:449px;top:763px;width:19px;height:19px;border-radius:50%;background:#f0382e;color:#fff;font-size:11px;text-align:center;line-height:19px">1</div>
<!-- music -->
<div class="a" style="left:477px;top:768px;width:44px;height:44px;border-radius:10px;background:linear-gradient(180deg,#fa5a6a,#f0283e)">
  <svg class="a" style="left:0;top:0" width="44" height="44" viewBox="0 0 44 44" fill="#fff"><path d="M17,13 L31,10 V28 a4,3.5 0 1 1 -2.5,-3.2 V15.5 L19.5,17.5 V31 a4,3.5 0 1 1 -2.5,-3.2 Z"/></svg>
</div>
<!-- figma -->
<div class="a" style="left:534px;top:768px;width:44px;height:44px;border-radius:10px;background:#1e1e1e">
  <svg class="a" style="left:0;top:0" width="44" height="44" viewBox="0 0 44 44"><path d="M15,9 h7 v8 h-7 a4,4 0 0 1 0,-8z" fill="#f24e1e"/><path d="M22,9 h6 a4,4 0 0 1 0,8 h-6z" fill="#ff7262"/><path d="M15,17 h7 v8 h-7 a4,4 0 0 1 0,-8z" fill="#a259ff"/><circle cx="28" cy="21" r="4" fill="#1abcfe"/><path d="M15,25 h7 v4 a4,4 0 1 1 -7,-4z" fill="#0acf83"/></svg>
</div>
<div class="a" style="left:598px;top:767px;width:1px;height:48px;background:#c4c4c4"></div>
<!-- chrome -->
<div class="a" style="left:618px;top:768px;width:44px;height:44px;border-radius:10px;background:#fafafa">
  <svg class="a" style="left:0;top:0" width="44" height="44" viewBox="0 0 44 44"><circle cx="22" cy="22" r="17" fill="#e33b2e"/><path d="M22,22 L7.3,30.5 A17,17 0 0 1 22,5 Z" fill="#e33b2e"/><path d="M22,22 L36.7,30.5 A17,17 0 0 1 22,39 A17,17 0 0 1 7.3,30.5 Z" fill="#34a853" transform="rotate(0)"/><path d="M22,22 L22,39 A17,17 0 0 0 36.7,30.5 L39,22 A17,17 0 0 0 36.7,13.5Z" fill="#fbbc04"/><circle cx="22" cy="22" r="8" fill="#fff"/><circle cx="22" cy="22" r="6.3" fill="#1a73e8"/></svg>
</div>
<!-- word -->
<div class="a" style="left:676px;top:768px;width:44px;height:44px;border-radius:10px;background:#fafafa">
  <svg class="a" style="left:0;top:0" width="44" height="44" viewBox="0 0 44 44"><rect x="14" y="8" width="23" height="28" rx="2" fill="#2b7cd3"/><rect x="14" y="15" width="23" height="7" fill="#185abd"/><rect x="14" y="22" width="23" height="7" fill="#103f91"/><rect x="14" y="29" width="23" height="7" rx="1" fill="#0a2d6e"/><rect x="7" y="14" width="16" height="16" rx="2" fill="#185abd"/><text x="15" y="27" font-family="Liberation Sans" font-weight="bold" font-size="12" fill="#fff" text-anchor="middle">W</text></svg>
</div>
<!-- telegram -->
<div class="a" style="left:734px;top:768px;width:44px;height:44px;border-radius:10px;background:#ececec">
  <svg class="a" style="left:0;top:0" width="44" height="44" viewBox="0 0 44 44"><defs><linearGradient id="tg" x1="0" y1="0" x2="0" y2="1"><stop offset="0" stop-color="#3ab0ea"/><stop offset="1" stop-color="#1e96d4"/></linearGradient></defs><circle cx="22" cy="22" r="17.5" fill="url(#tg)"/><path d="M11.5,21.5 L30,14 C31,13.6 31.8,14.2 31.5,15.5 L28.5,29.5 C28.2,30.6 27.5,30.8 26.6,30.3 L21.5,26.5 L19,29 C18.7,29.3 18.4,29.4 18,29.4 L18.4,24.3 L27.5,16.2 C27.9,15.8 27.4,15.6 26.9,16 L15.6,23.1 L11.5,21.8 C10.6,21.5 10.6,21.9 11.5,21.5Z" fill="#fff"/></svg>
</div>
<!-- zoom -->
<div class="a" style="left:791px;top:768px;width:45px;height:44px;border-radius:10px;background:linear-gradient(180deg,#2a7cf8,#0b5cff)">
  <div class="a" style="left:0;top:15px;width:45px;text-align:center;color:#fff;font-size:12.5px;font-weight:bold;letter-spacing:-0.3px">zoom</div>
</div>
<div class="a" style="left:855px;top:767px;width:1px;height:48px;background:#c4c4c4"></div>
<!-- doc thumbs -->
<div class="a" style="left:870px;top:765px;width:51px;height:50px;background:#fdfdfd;box-shadow:0 0 1px #bbb">
  <div class="a" style="left:8px;top:10px;width:34px;height:28px;background:repeating-linear-gradient(180deg,#8a8a8a 0 1px,transparent 1px 3px);opacity:.55"></div>
  <div class="a" style="left:35px;top:34px;width:14px;height:14px;border-radius:3px;background:#1e62c8"></div>
  <div class="a" style="left:37px;top:36px;font-size:8px;font-weight:bold;color:#fff">W</div>
</div>
<div class="a" style="left:930px;top:765px;width:47px;height:50px;background:#f8f8f6;box-shadow:0 0 1px #bbb">
  <div class="a" style="left:7px;top:12px;width:33px;height:24px;background:repeating-linear-gradient(180deg,#8a8a8a 0 1px,transparent 1px 3px);opacity:.45"></div>
  <div class="a" style="left:31px;top:34px;width:14px;height:14px;border-radius:3px;background:#1e62c8"></div>
  <div class="a" style="left:33px;top:36px;font-size:8px;font-weight:bold;color:#fff">W</div>
</div>
<div class="a" style="left:988px;top:765px;width:47px;height:50px;background:#1f2833;overflow:hidden">
  <div class="a" style="left:20px;top:5px;width:25px;height:38px;background:repeating-linear-gradient(180deg,#6f8db0 0 4px,#3f5570 4px 6px)"></div>
  <div class="a" style="left:2px;top:10px;width:14px;height:6px;background:#5a6f8a"></div>
  <div class="a" style="left:31px;top:35px;width:15px;height:15px;border-radius:50%;background:#2aa2e0;border:1.5px solid #fff"></div>
</div>
<!-- trash -->
<div class="a" style="left:1051px;top:767px;width:38px;height:46px;border-radius:3px 3px 8px 8px;background:linear-gradient(90deg,#e6e6e8,#f7f7f8 40%,#dcdcde);clip-path:polygon(0 0,100% 0,92% 100%,8% 100%)"></div>
<div class="a" style="left:1051px;top:767px;width:38px;height:5px;border-radius:50%;background:#d0d0d2"></div>
<!-- dots -->
<div class="a" style="left:209px;top:820px;width:3px;height:3px;border-radius:50%;background:#333;box-shadow:429px 0 0 #333,487px 0 0 #333,545px 0 0 #333,602px 0 0 #333"></div>

<!--/PARTS-->
</div><!--/SCREEN-->
<!--THUMB--><div class="a" style="left:1137px;top:731px;width:134px;height:89px;border-radius:5px;background:#f5f5f3;box-shadow:0 1px 3px rgba(0,0,0,.3)"><div class="a" style="left:3px;top:2.5px;width:128px;height:84px;overflow:hidden;border-radius:2px"><div class="a" style="left:0;top:0;width:1280px;height:829px;transform:scale(0.1,0.1013);transform-origin:0 0"><div class="a" style="left:0;top:0;width:1280px;height:829px;overflow:hidden;background:linear-gradient(100deg,#7d6634 0%,#8a7240 30%,#a89068 70%,#c2ad88 100%)">
<div class="a" style="left:0;top:757px;width:180px;height:72px;overflow:hidden"><div class="a" style="left:30px;top:22px;width:170px;height:22px;border-radius:50%;background:rgba(72,64,38,.5);filter:blur(7px);transform:rotate(13deg)"></div></div>
<!-- MENU BAR -->
<div class="a cmenubar"><svg class="a" style="left:0;top:0" width="1280" height="29" viewBox="0 0 1280 29">
<path d="M20.6,11.2 c0.9,0 1.9,-0.7 2.6,-0.7 c0.8,0 1.5,0.4 2,1 c-1.6,0.9 -1.4,3.4 0.3,4.1 c-0.4,1.2 -1.3,3 -2.4,3 c-0.8,0 -1,-0.5 -1.9,-0.5 c-0.9,0 -1.2,0.5 -2,0.5 c-1.3,0 -2.9,-2.6 -2.9,-4.8 c0,-2.2 1.3,-3.3 2.5,-3.3 c0.7,0 1.3,0.6 1.8,0.7z M20.7,10.6 c-0.1,-1 0.7,-2.2 1.9,-2.4 c0.1,1.1 -0.8,2.3 -1.9,2.4z" fill="#111"/>
<circle cx="902" cy="14.5" r="6.2" fill="#2a6cf0"/><text x="902" y="16.6" font-family="Liberation Sans" font-size="5.5" font-weight="bold" fill="#fff" text-anchor="middle">zm</text>
<circle cx="929" cy="14.5" r="6" fill="#1a1a1a"/><path d="M926,15 L932,12 L929.5,18 L929,15.5Z" fill="#fff"/>
<circle cx="957" cy="14" r="2.5" fill="#1a1a1a"/><g stroke="#1a1a1a" stroke-width="1"><path d="M957,8.5v1.8M957,17.7v1.8M951.5,14h1.8M960.7,14h1.8M953.1,10.1l1.2,1.2M959.7,16.7l1.2,1.2M953.1,17.9l1.2,-1.2M959.7,11.3l1.2,-1.2"/></g>
<path d="M1008.5,11.5 L1013.5,16.5 L1011,19 V9.5 L1013.5,12 L1008.5,17" fill="none" stroke="#1a1a1a" stroke-width="1.1"/>
<rect x="1031.5" y="9" width="16" height="11" rx="1.5" fill="none" stroke="#1a1a1a" stroke-width="1.1"/><text x="1039.5" y="17.8" font-family="Liberation Sans" font-size="9" font-weight="bold" fill="#1a1a1a" text-anchor="middle">A</text>
<rect x="1084" y="10.2" width="17" height="8" rx="2" fill="none" stroke="#8a8a8a" stroke-width="1"/><rect x="1085.5" y="11.7" width="12" height="5" rx="1" fill="#111"/><rect x="1101.5" y="12.8" width="1.3" height="2.8" fill="#8a8a8a"/>
<path d="M1117.8,12.6 a9,9 0 0 1 12.4,0" fill="none" stroke="#111" stroke-width="1.6"/><path d="M1119.9,14.7 a6,6 0 0 1 8.2,0" fill="none" stroke="#111" stroke-width="1.6"/><path d="M1122,16.8 a3,3 0 0 1 4,0 L1124,19Z" fill="#111"/>
<circle cx="1149" cy="13.2" r="3.6" fill="none" stroke="#111" stroke-width="1.4"/><path d="M1151.6,15.8 l2.6,2.6" stroke="#111" stroke-width="1.5"/>
<rect x="1169" y="9.2" width="11" height="4.6" rx="2.3" fill="none" stroke="#111" stroke-width="1.1"/><circle cx="1171.5" cy="11.5" r="1.6" fill="#111"/><rect x="1169" y="15.2" width="11" height="4.6" rx="2.3" fill="#111"/><circle cx="1177.5" cy="17.5" r="1.5" fill="#ddd"/><circle cx="1182" cy="14.5" r="1.3" fill="#6a5cff"/>
<text x="40.8" y="17.3" textLength="80.4" lengthAdjust="spacingAndGlyphs" font-family="Liberation Sans" font-size="9.8" font-weight="bold" fill="#1c1c1c">Zoom Workplace</text><text x="137.6" y="17.3" textLength="35.7" lengthAdjust="spacingAndGlyphs" font-family="Liberation Sans" font-size="9.8" font-weight="normal" fill="#1c1c1c">Meeting</text><text x="189.5" y="17.3" textLength="21.5" lengthAdjust="spacingAndGlyphs" font-family="Liberation Sans" font-size="9.8" font-weight="normal" fill="#1c1c1c">View</text><text x="226.5" y="17.3" textLength="17.5" lengthAdjust="spacingAndGlyphs" font-family="Liberation Sans" font-size="9.8" font-weight="normal" fill="#1c1c1c">Edit</text><text x="259.5" y="17.3" textLength="36.0" lengthAdjust="spacingAndGlyphs" font-family="Liberation Sans" font-size="9.8" font-weight="normal" fill="#1c1c1c">Window</text><text x="311.5" y="17.3" textLength="20.5" lengthAdjust="spacingAndGlyphs" font-family="Liberation Sans" font-size="9.8" font-weight="normal" fill="#1c1c1c">Help</text><text x="965.6" y="17.3" textLength="25.0" lengthAdjust="spacingAndGlyphs" font-family="Liberation Sans" font-size="9.8" font-weight="normal" fill="#1c1c1c">22 °C</text><text x="1062" y="17.3" textLength="18.5" lengthAdjust="spacingAndGlyphs" font-family="Liberation Sans" font-size="9.5" font-weight="normal" fill="#1c1c1c">80%</text><text x="1193.7" y="17.3" textLength="38.6" lengthAdjust="spacingAndGlyphs" font-family="Liberation Sans" font-size="9.8" font-weight="normal" fill="#1c1c1c">Вт 9 вер.</text><text x="1240.6" y="17.3" textLength="26.6" lengthAdjust="spacingAndGlyphs" font-family="Liberation Sans" font-size="9.8" font-weight="normal" fill="#1c1c1c">09:38</text></svg></div>

<div class="a" style="left:0;top:29px;width:1px;height:729px;background:#b9b9b9"></div>
<!-- ZOOM WINDOW -->
<div class="a czw">
  <div class="tl" style="left:11px;background:#fe5f57"></div>
  <div class="tl" style="left:28px;background:#febc2e"></div>
  <div class="tl" style="left:44px;background:#28c840"></div>
</div>

<!-- PHOTOS WINDOW -->
<div class="a cpw">
  <!-- top toolbar -->
  <div class="a" style="left:6px;top:6px;width:79px;height:32px;background:#4cc2ff;border-radius:4px"></div>
  <svg class="a" style="left:13px;top:13px" width="18" height="18" viewBox="0 0 18 18" fill="none" stroke="#0b2b48" stroke-width="1.5"><path d="M7,15.5 H3.5 A2,2 0 0 1 1.5,13.5 V3.5 A2,2 0 0 1 3.5,1.5 H13 A2,2 0 0 1 15,3.5 V8"/><circle cx="10.5" cy="5.5" r="1.2" fill="#0b2b48" stroke="none"/><path d="M2,12 L5.5,8.5 L8.5,11"/><path d="M9,17 L10,14 L15,9 L17,11 L12,16 Z" fill="#0b2b48" stroke-linejoin="round"/></svg>
  <svg class="a" style="left:0;top:0;overflow:visible" width="1" height="1"><text x="35.7" y="26" textLength="38.6" lengthAdjust="spacingAndGlyphs" font-family="Liberation Sans" font-weight="bold" font-size="11.5" fill="#0b2b48">Змінити</text></svg>
  <svg class="a" style="left:97px;top:13px" width="18" height="18" viewBox="0 0 18 18" fill="none" stroke="#e8e8e8" stroke-width="1.4"><path d="M1.8,8.7 A7,7 0 1 1 12.3,14.8"/><path d="M9.6,15.6 L12.8,15.3 L12.6,12.1" stroke-linejoin="round"/><circle cx="8.8" cy="8.7" r="1.3"/></svg>
  <svg class="a" style="left:138px;top:13px" width="16" height="16" viewBox="0 0 16 16" fill="none" stroke="#e8e8e8" stroke-width="1.4"><path d="M1.5 3.5h13"/><path d="M6 3.5V2h4v1.5"/><path d="M3 3.5l1 10.5a1 1 0 0 0 1 1h6a1 1 0 0 0 1-1l1-10.5"/><path d="M6.7 6.5v5.5M9.3 6.5v5.5"/></svg>
  <svg class="a" style="left:176px;top:13px" width="17" height="16" viewBox="0 0 17 16" fill="none" stroke="#e8e8e8" stroke-width="1.4"><path d="M4 5V2h9v3"/><rect x="1.2" y="5" width="14.6" height="7" rx="2"/><rect x="4.5" y="9.5" width="8" height="5.5" rx="1" fill="#212122"/></svg>
  <svg class="a" style="left:216px;top:13px" width="17" height="16" viewBox="0 0 17 16" fill="none" stroke="#e8e8e8" stroke-width="1.4"><path d="M6.5 3H3a1.5 1.5 0 0 0-1.5 1.5v9A1.5 1.5 0 0 0 3 15h9a1.5 1.5 0 0 0 1.5-1.5V11"/><path d="M5.5 11.5c1-4 4-5.5 7.5-5.5"/><path d="M11 2.5l4 3.5-4 3.5"/></svg>
  <svg class="a" style="left:255px;top:13px" width="17" height="16" viewBox="0 0 17 16" fill="none" stroke="#e8e8e8" stroke-width="1.4"><rect x="1.2" y="1.2" width="14.6" height="13.6" rx="2.5"/><path d="M6.5 4.8v6.4l5-3.2z"/></svg>
  <div class="a" style="left:295px;top:19px;width:3px;height:3px;border-radius:50%;background:#eee;box-shadow:6px 0 0 #eee,12px 0 0 #eee"></div>
  <div class="a" style="left:474px;top:15px;font-size:11.5px;color:#e6e6e6;white-space:nowrap">09.09.2025.jpg</div>
  <!-- app icons -->
  <svg class="a" style="left:690px;top:14px" width="17" height="15" viewBox="0 0 17 15"><defs><linearGradient id="cp1" x1="0" y1="0" x2="1" y2="1"><stop offset="0" stop-color="#1fb0ff"/><stop offset=".5" stop-color="#ffd23c"/><stop offset="1" stop-color="#ff5a7a"/></linearGradient><linearGradient id="cp2" x1="0" y1="0" x2="1" y2="1"><stop offset="0" stop-color="#b06bff"/><stop offset="1" stop-color="#ff6a4a"/></linearGradient></defs><path d="M2 9L5 2.5Q6 1 8 1h2L6.5 12Q6 14 4 14H2.5Q0.5 14 1 12z" fill="url(#cp1)"/><path d="M15 6l-3 6.5Q11 14 9 14H7L10.5 3Q11 1 13 1h1.5Q16.5 1 16 3z" fill="url(#cp2)"/></svg>
  <div class="a" style="left:731px;top:14px;width:15px;height:15px;border-radius:3px;background:linear-gradient(160deg,#6fb6ff,#2a74e0)"></div>
  <svg class="a" style="left:733px;top:16px" width="12" height="12" viewBox="0 0 12 12"><circle cx="9.5" cy="2.5" r="1.3" fill="#fff"/><path d="M0 12L6 4l6 8z" fill="#4fd0ff"/></svg>
  <svg class="a" style="left:771px;top:13px" width="15" height="17" viewBox="0 0 15 17"><path d="M2,1.5 C8,1 14,2.5 14,8 H8 C5,8 2.5,5 2,1.5Z" fill="#ff6f91"/><path d="M3,16 C9,16.5 14.5,14 14,8.5 H8 C5,8.5 3,12 3,16Z" fill="#7a5cf5"/></svg>
  <svg class="a" style="left:809px;top:13px" width="16" height="17" viewBox="0 0 16 17"><defs><linearGradient id="cc" x1="0" y1="0" x2="0" y2="1"><stop offset="0" stop-color="#d68cff"/><stop offset="1" stop-color="#8a3ae8"/></linearGradient></defs><path d="M1 5l13-3 .5 3z" fill="#b878ff"/><rect x="1" y="6" width="14" height="10" rx="1.5" fill="url(#cc)"/></svg>
  <svg class="a" style="left:847px;top:14px" width="20" height="14" viewBox="0 0 20 14"><defs><linearGradient id="od" x1="0" y1="0" x2="0" y2="1"><stop offset="0" stop-color="#3aa9ff"/><stop offset="1" stop-color="#1f78e6"/></linearGradient></defs><path d="M5 13.5A4 4 0 0 1 4.5 5.5 6 6 0 0 1 15.5 5 4.3 4.3 0 0 1 16 13.5z" fill="url(#od)"/></svg>
  <div class="a" style="left:883px;top:0;width:1px;height:36px;background:#2c2c2c"></div>
  <div class="a" style="left:904px;top:21px;width:11px;height:1.3px;background:#e0e0e0"></div>
  <div class="a" style="left:947px;top:15px;width:10px;height:10px;border:1.3px solid #e0e0e0;border-radius:1.5px"></div>
  <svg class="a" style="left:989px;top:14px" width="12" height="12" viewBox="0 0 12 12" stroke="#e0e0e0" stroke-width="1.3"><path d="M1 1l10 10M11 1L1 11"/></svg>

  <!-- IMAGE -->
  <div class="a cimg" style="left:120px;top:43px;width:777px;height:438px;overflow:hidden;background:#f3f4f8"><svg class="a" style="left:0;top:0" width="777" height="438" viewBox="0 0 777 438">
<defs>
 <linearGradient id="sw" x1="0" y1="0" x2="1" y2="0.3"><stop offset="0" stop-color="#0fd2f2"/><stop offset="0.45" stop-color="#22a6f4"/><stop offset="1" stop-color="#3a56ee"/></linearGradient>
 <linearGradient id="sw2" x1="0" y1="0" x2="1" y2="0"><stop offset="0" stop-color="#14c8f0"/><stop offset="0.5" stop-color="#2a8af2"/><stop offset="1" stop-color="#3a56ee"/></linearGradient>
 <linearGradient id="cf" x1="0.15" y1="0.1" x2="0.75" y2="1"><stop offset="0" stop-color="#dfe7f3"/><stop offset="0.4" stop-color="#f6f6f4"/><stop offset="0.72" stop-color="#f9ebc6"/><stop offset="1" stop-color="#f8dc90"/></linearGradient>
 <radialGradient id="halo" cx="0.5" cy="0.5" r="0.5"><stop offset="0.93" stop-color="#ffffff"/><stop offset="1" stop-color="#ffffff" stop-opacity="0"/></radialGradient>
 <linearGradient id="shade" x1="0" y1="0.62" x2="0.75" y2="0.3"><stop offset="0" stop-color="#7fa2d8" stop-opacity="0.85"/><stop offset="0.22" stop-color="#a8bfe4" stop-opacity="0.5"/><stop offset="0.45" stop-color="#ffffff" stop-opacity="0"/></linearGradient>
 <linearGradient id="shade2" x1="0.2" y1="0.3" x2="0.5" y2="1"><stop offset="0.5" stop-color="#c8c0b0" stop-opacity="0"/><stop offset="1" stop-color="#c8bca0" stop-opacity="0.25"/></linearGradient>
 <clipPath id="circclip"><circle cx="624" cy="240" r="161"/></clipPath>
 <linearGradient id="lg" x1="0" y1="0" x2="1" y2="0"><stop offset="0" stop-color="#5a78c8"/><stop offset="1" stop-color="#3a5fb8"/></linearGradient>
</defs>
<rect width="777" height="438" fill="#f4f5f9"/>
<path d="M250,0 C238,22 300,48 420,62 L520,70 L279,0 Z" fill="#e6e6f1"/>
<path d="M279,0 C320,30 400,48 500,64 C600,80 700,110 777,200 L777,0 Z" fill="url(#sw)"/>
<path d="M0,95 H540 V410 H0 Z" fill="#0a3a8c"/>
<path d="M0,410 H540 V380 L600,380 L620,438 H0 Z" fill="#e4e4e8"/>
<path d="M540,395 L600,395 L600,425 L540,425 Z" fill="#d9dadf"/>
<path d="M380,438 C500,420 650,380 777,300 L777,342 C760,355 730,372 691,383 C600,405 520,425 459,438 Z" fill="#e8e8f6"/>
<path d="M459,438 C520,425 600,405 691,383 C730,372 760,355 777,342 L777,438 Z" fill="url(#sw2)"/>
<circle cx="624" cy="240" r="163" fill="url(#halo)"/>
<circle cx="624" cy="240" r="161" fill="url(#cf)"/>
<circle cx="624" cy="240" r="161" fill="url(#shade)"/>
<circle cx="624" cy="240" r="161" fill="url(#shade2)"/>
<g clip-path="url(#circclip)">
<g fill="none" stroke="#2f63b9" stroke-width="4.6" stroke-linejoin="round" stroke-linecap="square">
 <path d="M709.5,105 V160 H762"/>
 <path d="M714,106 C722,116 723,128 721,136 C717,139 716,147 723,148"/>
 <path d="M755,106 C747,116 746,128 748,136 C752,139 753,147 746,148"/>
 <path d="M726,149 L734.4,123 L743,149"/>
 <path d="M724,150 C724,164 728,172 734.4,179 C741,172 745,164 745,150 Z"/>
 <path d="M724,158 H745 M734.4,150 V179" stroke-width="2.5"/>
</g>
</g>
<path d="M488.5,237.0 A141,141 0 0 1 656.4,98.6" fill="none" stroke="#3566c4" stroke-width="11.5"/>
<path d="M745.0,156.1 A141,141 0 0 1 770.5,237.0" fill="none" stroke="#3566c4" stroke-width="11.5"/>
<path d="M770.5,237.0 A141,141 0 0 1 488.5,237.0" fill="none" stroke="#f8c81c" stroke-width="11.5"/>
<g transform="translate(539,143) scale(0.2293)"><path d="M55,520 C110,470 190,460 250,500 C300,540 340,600 385,595 C400,560 310,470 300,420 C290,330 350,120 395,45 C430,50 465,110 455,190 C445,260 410,350 405,410 C460,330 560,200 630,145 C665,160 670,220 650,260 C600,340 520,420 490,485 C570,430 680,370 750,350 C765,380 760,420 730,440 C660,480 590,530 545,570 C600,575 680,570 725,580 C720,620 700,640 660,645 C610,650 570,655 550,660 C500,720 420,790 320,780 C220,770 170,680 130,590 C110,555 80,530 55,520 Z" fill="#2f63b9" stroke="#2f63b9" stroke-width="8" stroke-linejoin="round"/></g>
<!-- logo -->
<circle cx="48.6" cy="41.5" r="37" fill="#fff" stroke="url(#lg)" stroke-width="7.5"/>
<g fill="none" stroke="#5a68a8" stroke-width="0.9">
 <path d="M41,13.5 H56 M34,17 H63" stroke="#8a92c0" stroke-width="1.1"/>
 <path d="M49,19.5 L45.5,27 H52.5 Z"/>
 <path d="M43,27 V45 M55,27 V45 M46,31 v14 M49,29 v16 M52,31 v14"/>
 <path d="M37,33 H43 M55,33 H61 M31,36 H37 V45 M61,36 H67 V45 M37,33 V45 M61,33 V45"/>
 <path d="M29,45 H69" stroke-width="1.2"/>
 <path d="M22,50 C32,45 44,48 49,51 C54,48 66,45 76,50 M20,53 C34,49 44,52 49,54 C54,52 64,49 78,53"/>
 <path d="M33,65 C35,58 37,58 37,65 C39,61 44,61 46,63 C50,59 56,59 58,65 C60,61 64,61 66,63" stroke-width="1.2" stroke="#3a3f60"/>
</g>
<!-- globe -->
<circle cx="53" cy="423.5" r="9.5" fill="#0e3a8a"/>
<circle cx="53" cy="423.5" r="6" fill="none" stroke="#cfe0ff" stroke-width="1"/>
<path d="M47,423.5 H59 M53,417.5 V429.5" stroke="#cfe0ff" stroke-width="0.8"/>
<text x="21" y="128" textLength="76.8" lengthAdjust="spacingAndGlyphs" font-family="Liberation Serif" font-size="23" font-weight="bold" fill="#fff" >ТЕМА:</text><text x="129.6" y="128" textLength="211.4" lengthAdjust="spacingAndGlyphs" font-family="Liberation Serif" font-size="29" font-weight="bold" fill="#fff" >ДОТРИМАННЯ</text><text x="377" y="128" textLength="71.69999999999999" lengthAdjust="spacingAndGlyphs" font-family="Liberation Serif" font-size="29" font-weight="bold" fill="#fff" >ПРАВ</text><text x="19.6" y="158.5" textLength="136.1" lengthAdjust="spacingAndGlyphs" font-family="Liberation Serif" font-size="29" font-weight="bold" fill="#fff" >ЛЮДИНИ</text><text x="248" y="158.5" textLength="52" lengthAdjust="spacingAndGlyphs" font-family="Liberation Serif" font-size="29" font-weight="bold" fill="#fff" >ПІД</text><text x="391.3" y="158.5" textLength="57.39999999999998" lengthAdjust="spacingAndGlyphs" font-family="Liberation Serif" font-size="29" font-weight="bold" fill="#fff" >ЧАС</text><text x="21.5" y="189.5" textLength="164.1" lengthAdjust="spacingAndGlyphs" font-family="Liberation Serif" font-size="29" font-weight="bold" fill="#fff" >ВОЄННОГО</text><text x="342" y="189.5" textLength="106.69999999999999" lengthAdjust="spacingAndGlyphs" font-family="Liberation Serif" font-size="29" font-weight="bold" fill="#fff" >СТАНУ:</text><text x="21.5" y="220.3" textLength="144.8" lengthAdjust="spacingAndGlyphs" font-family="Liberation Serif" font-size="29" font-weight="bold" fill="#fff" >ВИКЛИКИ</text><text x="213.6" y="220.3" textLength="7.800000000000011" lengthAdjust="spacingAndGlyphs" font-family="Liberation Serif" font-size="29" font-weight="bold" fill="#fff" >І</text><text x="267.2" y="220.3" textLength="181.5" lengthAdjust="spacingAndGlyphs" font-family="Liberation Serif" font-size="29" font-weight="bold" fill="#fff" >МЕХАНІЗМИ</text><text x="19.6" y="250.5" textLength="138.0" lengthAdjust="spacingAndGlyphs" font-family="Liberation Serif" font-size="29" font-weight="bold" fill="#fff" >ЗАХИСТУ</text>
<circle cx="269.0" cy="245.8" r="1.1" fill="#dfe6f5"/><circle cx="279.9" cy="245.8" r="1.1" fill="#dfe6f5"/><circle cx="290.7" cy="245.8" r="1.1" fill="#dfe6f5"/><circle cx="301.6" cy="245.8" r="1.1" fill="#dfe6f5"/><circle cx="312.4" cy="245.8" r="1.1" fill="#dfe6f5"/><circle cx="323.2" cy="245.8" r="1.1" fill="#dfe6f5"/><circle cx="334.1" cy="245.8" r="1.1" fill="#dfe6f5"/><circle cx="344.9" cy="245.8" r="1.1" fill="#dfe6f5"/><circle cx="355.8" cy="245.8" r="1.1" fill="#dfe6f5"/><circle cx="366.6" cy="245.8" r="1.1" fill="#dfe6f5"/><circle cx="269.0" cy="255.0" r="1.1" fill="#dfe6f5"/><circle cx="279.9" cy="255.0" r="1.1" fill="#dfe6f5"/><circle cx="290.7" cy="255.0" r="1.1" fill="#dfe6f5"/><circle cx="301.6" cy="255.0" r="1.1" fill="#dfe6f5"/><circle cx="312.4" cy="255.0" r="1.1" fill="#dfe6f5"/><circle cx="323.2" cy="255.0" r="1.1" fill="#dfe6f5"/><circle cx="334.1" cy="255.0" r="1.1" fill="#dfe6f5"/><circle cx="344.9" cy="255.0" r="1.1" fill="#dfe6f5"/><circle cx="355.8" cy="255.0" r="1.1" fill="#dfe6f5"/><circle cx="366.6" cy="255.0" r="1.1" fill="#dfe6f5"/>
<text x="97.4" y="54.5" textLength="267.6" lengthAdjust="spacingAndGlyphs" font-family="Liberation Sans" font-size="19" font-weight="normal" fill="#1a1a1a" >кафедра політичних наук і права</text><text x="32.7" y="295" textLength="57.3" lengthAdjust="spacingAndGlyphs" font-family="Liberation Sans" font-size="16.5" font-weight="normal" fill="#e8edf7" >лектор:</text><text x="44.7" y="320" textLength="233.3" lengthAdjust="spacingAndGlyphs" font-family="Liberation Sans" font-size="15.5" font-weight="bold" fill="#f4f6fb" >Представник Уповноваженого</text><text x="44.7" y="345" textLength="307.3" lengthAdjust="spacingAndGlyphs" font-family="Liberation Sans" font-size="15.5" font-weight="bold" fill="#f4f6fb" >Верховної ради України  з прав людини</text><text x="44.7" y="370" textLength="140.3" lengthAdjust="spacingAndGlyphs" font-family="Liberation Sans" font-size="15.5" font-weight="bold" fill="#f4f6fb" >в Одеській області</text><text x="271" y="398" textLength="175" lengthAdjust="spacingAndGlyphs" font-family="Liberation Sans" font-size="22" font-weight="bold" fill="#fff" >ПОПОВА МАРІЯ</text><text x="211" y="432.5" textLength="223" lengthAdjust="spacingAndGlyphs" font-family="Liberation Sans" font-size="16.5" font-weight="bold" fill="#141414" >ОДЕСА - 09 вересня 2025р.</text>
</svg></div>

  <!-- bottom bar -->
  <svg class="a" style="left:16px;top:495px" width="17" height="14" viewBox="0 0 17 14" fill="none" stroke="#e0e0e0" stroke-width="1.3"><rect x="1" y="1" width="15" height="12" rx="2"/><path d="M1 9.5h15M4 9.5v3.5M7 9.5v3.5M10 9.5v3.5M13 9.5v3.5"/></svg>
  <div class="a" style="left:51px;top:484px;width:1px;height:32px;background:#2c2c2c"></div>
  <svg class="a" style="left:68px;top:495px" width="17" height="15" viewBox="0 0 17 15" fill="none" stroke="#e6e6e6" stroke-width="1.3"><path d="M8.5 14L2 7.5A3.8 3.8 0 0 1 8.5 2.3 3.8 3.8 0 0 1 15 7.5z"/></svg>
  <svg class="a" style="left:108px;top:494px" width="16" height="16" viewBox="0 0 16 16" fill="none" stroke="#e6e6e6" stroke-width="1.3"><circle cx="8" cy="8" r="6.8"/><path d="M8 7v5"/><circle cx="8" cy="4.6" r=".5" fill="#e6e6e6"/></svg>
  <svg class="a" style="left:145px;top:496px" width="13" height="12" viewBox="0 0 13 12" fill="none" stroke="#7a7a7a" stroke-width="1.2"><path d="M2 11V4.5h3l1.5-2.5h2L12 6v5z"/><path d="M5 11V7h3v4"/></svg>
  <div class="a" style="left:167px;top:496px;font-size:13px;color:#8d8d8d;white-space:nowrap;letter-spacing:-0.2px">1920 x 1080</div>
  <svg class="a" style="left:245px;top:496px" width="11" height="11" viewBox="0 0 11 11"><path d="M0 0h9l2 2v9H0z" fill="#7a7a7a"/><rect x="2.5" y="1" width="5" height="3" fill="#212122"/><rect x="2" y="6.5" width="7" height="3.5" fill="#212122"/></svg>
  <div class="a" style="left:265px;top:496px;font-size:13px;color:#8d8d8d;white-space:nowrap">269.1 КБ</div>
  <svg class="a" style="left:482px;top:494px" width="16" height="16" viewBox="0 0 16 16" fill="none" stroke="#e0e0e0" stroke-width="1.3"><path d="M1 5V3a2 2 0 0 1 2-2h2M11 1h2a2 2 0 0 1 2 2v2M15 11v2a2 2 0 0 1-2 2h-2M5 15H3a2 2 0 0 1-2-2v-2"/><circle cx="8" cy="8" r="2"/></svg>
  <svg class="a" style="left:522px;top:494px" width="16" height="16" viewBox="0 0 16 16" fill="none" stroke="#e0e0e0" stroke-width="1.3"><path d="M1 5V3a2 2 0 0 1 2-2h2M11 1h2a2 2 0 0 1 2 2v2M15 11v2a2 2 0 0 1-2 2h-2M5 15H3a2 2 0 0 1-2-2v-2"/><path d="M4.5 5.5h7M4.5 8h7M4.5 10.5h4.5"/></svg>
  <svg class="a" style="left:651px;top:495px" width="17" height="14" viewBox="0 0 17 14" fill="none" stroke="#e0e0e0" stroke-width="1.3"><rect x="1" y="1" width="15" height="12" rx="2"/><ellipse cx="8.5" cy="7" rx="4" ry="3" fill="#e0e0e0"/></svg>
  <div class="a" style="left:679px;top:487px;width:82px;height:30px;border-radius:4px;background:#2a2a2b"></div>
  <div class="a" style="left:691px;top:496px;font-size:13px;color:#e6e6e6;white-space:nowrap">57 %</div>
  <svg class="a" style="left:738px;top:499px" width="9" height="6" viewBox="0 0 9 6" fill="none" stroke="#cfcfcf" stroke-width="1.2"><path d="M1 1l3.5 3.5L8 1"/></svg>
  <svg class="a" style="left:772px;top:494px" width="16" height="16" viewBox="0 0 16 16" fill="none" stroke="#e6e6e6" stroke-width="1.4"><circle cx="6.5" cy="6.5" r="5.2"/><path d="M10.5 10.5L15 15M4 6.5h5"/></svg>
  <div class="a" style="left:801px;top:501px;width:118px;height:3px;border-radius:2px;background:#9a9a9a"></div>
  <div class="a" style="left:801px;top:501px;width:15px;height:3px;border-radius:2px;background:#4cc2ff"></div>
  <div class="a" style="left:808px;top:493px;width:19px;height:19px;border-radius:50%;background:#454545"></div>
  <div class="a" style="left:811px;top:496px;width:13px;height:13px;border-radius:50%;background:#4cc2ff"></div>
  <svg class="a" style="left:931px;top:494px" width="16" height="16" viewBox="0 0 16 16" fill="none" stroke="#e6e6e6" stroke-width="1.4"><circle cx="6.5" cy="6.5" r="5.2"/><path d="M10.5 10.5L15 15M4 6.5h5M6.5 4v5"/></svg>
  <div class="a" style="left:969px;top:484px;width:1px;height:32px;background:#2c2c2c"></div>
  <svg class="a" style="left:987px;top:494px" width="16" height="16" viewBox="0 0 16 16" fill="none" stroke="#e6e6e6" stroke-width="1.4"><path d="M9.5 1H15v5.5M15 1L9 7M6.5 15H1V9.5M1 15l6-6"/></svg>
</div>

<div class="a" style="left:1px;top:154px;width:1018px;height:1px;background:repeating-linear-gradient(90deg,transparent 0 24px,#8a8a8a 24px 58px,transparent 58px 68px);opacity:.35"></div>
<div class="a" style="left:1px;top:677px;width:1018px;height:1px;background:repeating-linear-gradient(90deg,transparent 0 24px,#8a8a8a 24px 58px,transparent 58px 68px);opacity:.3"></div>
<!--PARTS-->
<!-- TOP VIDEO TILES -->
<div class="a" style="left:1057px;top:79px;width:191px;height:108px;border-radius:7px 7px 0 0;overflow:hidden;background:linear-gradient(90deg,#d2dde2 0%,#dfe8ec 50%,#e2ebee 100%)">
  <div class="a" style="left:0;top:0;width:191px;height:40px;background:linear-gradient(180deg,#e6eaea,rgba(223,231,234,0))"></div>
  <svg class="a" style="left:0;top:0" width="191" height="108" viewBox="0 0 191 108" font-family="Liberation Sans" font-weight="bold" fill="#34424a">
   <text x="0" y="46" textLength="57" lengthAdjust="spacingAndGlyphs" font-size="15.5">будсме</text>
   <text x="121" y="50" textLength="18" lengthAdjust="spacingAndGlyphs" font-size="13">іни</text>
   <text x="1" y="63" textLength="50" lengthAdjust="spacingAndGlyphs" font-size="15.5">budsm</text>
   <text x="123" y="67" textLength="37" lengthAdjust="spacingAndGlyphs" font-size="14">raine</text>
  </svg>
  <div class="a" style="left:24px;top:80px;width:24px;height:20px;border-radius:40% 40% 0 0;background:#cfcfca"></div>
  <div class="a" style="left:112px;top:78px;width:58px;height:34px;border-radius:30% 60% 0 0;background:linear-gradient(90deg,#e4e2dc,#f2f1ec 40%,#d8d8d4)"></div>
  <div class="a" style="left:34px;top:86px;width:88px;height:26px;background:#1a1615;border-radius:30% 30% 0 0"></div>
  <div class="a" style="left:51px;top:7px;width:70px;height:80px;border-radius:48% 48% 30% 30%;background:#362b27"></div>
  <div class="a" style="left:59px;top:19px;width:49px;height:60px;border-radius:45% 45% 50% 50%;background:linear-gradient(180deg,#cfa292,#c28e7e 60%,#b58070)"></div>
  <div class="a" style="left:62px;top:44px;width:44px;height:8px;border:1px solid #6a5a55;border-radius:40%;opacity:.6"></div>
  <div class="a" style="left:74px;top:64px;width:16px;height:4px;border-radius:50%;background:#92504a"></div>
</div>
<div class="a" style="left:1057px;top:187px;width:191px;height:107px;overflow:hidden;background:linear-gradient(180deg,#f0f3e4 0%,#e6eed2 45%,#c6df9a 100%)">
  <svg class="a" style="left:0;top:0;filter:blur(0.8px)" width="191" height="107" viewBox="0 0 191 107">
   <path d="M2,30 L12,107 L20,107 L8,20Z" fill="#8cc850" opacity=".8"/>
   <path d="M28,20 L22,107 L30,107 L34,24Z" fill="#a6d668" opacity=".7"/>
   <path d="M58,3 L40,107 L48,107 L63,3Z" fill="#6fb83a" opacity=".85"/>
   <path d="M74,3 L88,60 L93,60 L79,3Z" fill="#9ccf60" opacity=".8"/>
   <path d="M98,40 L115,107 L123,107 L103,40Z" fill="#5fa82e" opacity=".85"/>
   <path d="M138,5 L152,70 L158,70 L143,5Z" fill="#88c44a" opacity=".8"/>
   <path d="M165,50 L130,107 L140,107 L170,54Z" fill="#4e9a2a" opacity=".9"/>
   <path d="M172,8 L168,90 L175,90 L178,8Z" fill="#7cc040" opacity=".8"/>
   <path d="M185,15 L188,107 L191,107 L191,15Z" fill="#6ab436" opacity=".8"/>
   <ellipse cx="168" cy="72" rx="14" ry="12" fill="#ffffff" opacity=".6"/>
   <rect x="0" y="80" width="191" height="27" fill="#9ccc5c" opacity=".45"/>
  </svg>
  <div class="a" style="left:34px;top:34px;width:62px;height:50px;border-radius:50% 50% 30% 30%;background:#2e2c30"></div>
  <div class="a" style="left:40px;top:62px;width:52px;height:50px;border-radius:40% 40% 20% 20%;background:linear-gradient(180deg,#a08a7e,#c3a596)"></div>
  <div class="a" style="left:42px;top:76px;width:48px;height:9px;border:1px solid #d0d0d0;border-radius:40%;opacity:.8"></div>
  <div class="a" style="left:34px;top:40px;width:22px;height:30px;border-radius:50%;background:#2e2c30"></div>
</div>
<div class="a" style="left:1056px;top:293px;width:193px;height:109px;border:2px solid #3dc95a;border-radius:0 0 7px 7px;background:#232323;overflow:hidden">
  <div class="a" style="left:64px;top:1px;width:61px;height:105px;background:linear-gradient(90deg,#d8e2e8 0%,#e8eff2 45%,#d4d6d4 62%,#e0e0dc 100%)"></div>
  <div class="a" style="left:64px;top:1px;width:61px;height:22px;background:linear-gradient(180deg,#a8acae,rgba(200,204,206,0))"></div>
  <div class="a" style="left:64px;top:78px;width:61px;height:30px;border-radius:35% 35% 0 0;background:#c9a270"></div>
  <div class="a" style="left:82px;top:37px;width:29px;height:44px;border-radius:42% 42% 45% 45%;background:#bc9c8a"></div>
  <div class="a" style="left:82px;top:36px;width:29px;height:10px;border-radius:50% 50% 15% 15%;background:#2e2826"></div>
  <div class="a" style="left:85px;top:63px;width:23px;height:18px;border-radius:20% 20% 50% 50%;background:#54423a"></div>
  <div class="a" style="left:91px;top:63px;width:10px;height:4px;border-radius:40%;background:#a88878"></div>
</div>
</div>
<!-- GALLERY -->
<div class="a" style="left:1025px;top:421px;width:255px;height:283px;background:#232323;border-radius:4px 0 0 4px"></div>
<!-- Inna -->
<div class="a" style="left:1026px;top:421px;width:126px;height:71px;overflow:hidden;border-radius:5px 0 0 0;background:#655d56">
  <div class="a" style="left:0;top:0;width:11px;height:71px;background:#8a847c"></div>
  <div class="a" style="left:112px;top:0;width:14px;height:71px;background:#8e8882"></div>
  <div class="a" style="left:11px;top:0;width:2px;height:71px;background:#cdbf9f;box-shadow:4px 0 0 #c4b698,11px 0 0 #cdbf9f,15px 0 0 #bfb192,18px 0 0 #d0c2a2,52px 0 0 #cdbf9f,56px 0 0 #c6b898,59px 0 0 #cdbf9f,99px 0 0 #d4c6a6"></div>
  <div class="a" style="left:13px;top:1px;width:6px;height:18px;background:#e8e4dc"></div>
  <div class="a" style="left:31px;top:15px;width:12px;height:4px;background:#d9d6d0"></div>
  <div class="a" style="left:48px;top:4px;width:12px;height:14px;background:repeating-linear-gradient(90deg,#b8ae98 0 1px,transparent 1px 3px)"></div>
  <div class="a" style="left:70px;top:9px;width:16px;height:10px;background:#cfc9bc"></div>
  <div class="a" style="left:91px;top:9px;width:17px;height:11px;background:repeating-linear-gradient(180deg,#e4e0d8 0 2px,#9a948a 2px 3px)"></div>
  <div class="a" style="left:14px;top:20px;width:96px;height:2px;background:#3a342e"></div>
  <div class="a" style="left:14px;top:46px;width:96px;height:2px;background:#3a342e"></div>
  <div class="a" style="left:34px;top:31px;width:4px;height:14px;background:#c9bfae;box-shadow:5px -3px 0 #d4cab8"></div>
  <div class="a" style="left:94px;top:28px;width:8px;height:18px;border-radius:40% 40% 0 0;background:#a49c90"></div>
  <div class="a" style="left:93px;top:53px;width:15px;height:18px;background:repeating-linear-gradient(90deg,#ddd8ce 0 4px,#8a847a 4px 5px)"></div>
  <div class="a" style="left:44px;top:20px;width:34px;height:54px;border-radius:45% 45% 20% 20%;background:#a8a29a"></div>
  <div class="a" style="left:50px;top:27px;width:22px;height:31px;border-radius:45% 45% 50% 50%;background:#b4988a"></div>
  <div class="a" style="left:36px;top:62px;width:52px;height:12px;border-radius:40% 40% 0 0;background:#b8b8bc"></div>
</div>
<!-- Anastasia -->
<div class="a" style="left:1188px;top:428px;width:57px;height:56px;border-radius:6px;overflow:hidden;background:linear-gradient(90deg,#6a52c4,#9a80e0 60%,#b8a4ec)">
  <div class="a" style="left:8px;top:4px;width:28px;height:34px;border-radius:45% 45% 30% 30%;background:#8a6a50"></div>
  <div class="a" style="left:18px;top:8px;width:14px;height:19px;border-radius:45%;background:#d9b6a4"></div>
  <div class="a" style="left:0;top:27px;width:44px;height:30px;border-radius:30% 40% 0 0;background:#262a3c"></div>
  <div class="a" style="left:40px;top:31px;width:17px;height:26px;border-radius:30% 30% 0 0;background:#e8e6ea"></div>
  <div class="a" style="left:41px;top:24px;width:9px;height:9px;border-radius:40%;background:#d8b4a0"></div>
  <div class="a" style="left:37px;top:11px;width:8px;height:16px;border-radius:2px;background:#1e1e26"></div>
</div>
<!-- Tatyana -->
<div class="a" style="left:1062px;top:492px;width:54px;height:71px;overflow:hidden;background:linear-gradient(180deg,#f4f6f6,#f8f8f6 60%,#ecebe6)">
  <div class="a" style="left:0;top:13px;width:19px;height:48px;background:linear-gradient(90deg,#f0c840,#e0b030);clip-path:polygon(0 0,100% 18%,100% 100%,0 100%)"></div>
  <div class="a" style="left:8px;top:39px;width:40px;height:34px;border-radius:40% 45% 0 0;background:#e2ddd2"></div>
  <div class="a" style="left:17px;top:18px;width:16px;height:23px;border-radius:45%;background:#96786a"></div>
  <div class="a" style="left:18px;top:16px;width:15px;height:7px;border-radius:50% 50% 20% 20%;background:#3c3c40"></div>
</div>
<!-- Bukovsky -->
<div class="a" style="left:1188px;top:641px;width:57px;height:60px;border-radius:6px;overflow:hidden;background:linear-gradient(90deg,#e2dccc 0%,#ddd6c4 55%,#2a2f3c 70%,#30343a 100%)">
  <div class="a" style="left:11px;top:10px;width:7px;height:11px;background:#2c3440"></div>
  <div class="a" style="left:40px;top:12px;width:24px;height:40px;border-radius:50%;background:#4a4e50"></div>
  <div class="a" style="left:2px;top:30px;width:54px;height:32px;border-radius:45% 45% 0 0;background:#8a7050"></div>
  <div class="a" style="left:18px;top:40px;width:20px;height:22px;border-radius:40% 40% 0 0;background:#3a3632"></div>
  <div class="a" style="left:16px;top:4px;width:26px;height:36px;border-radius:40% 40% 48% 48%;background:#d4b4a2"></div>
  <div class="a" style="left:17px;top:2px;width:24px;height:7px;border-radius:50% 50% 10% 10%;background:#4a4442"></div>
</div>
<!-- big names -->
<svg class="a" style="left:0;top:0;overflow:visible" width="1" height="1"><text x="1164" y="532.6" textLength="104.6" lengthAdjust="spacingAndGlyphs" font-family="Liberation Sans" font-size="15" fill="#f0f0f0">Гедікова Ната...</text></svg>
<svg class="a" style="left:0;top:0;overflow:visible" width="1" height="1"><text x="1049" y="603.9" textLength="79.9" lengthAdjust="spacingAndGlyphs" font-family="Liberation Sans" font-size="15" fill="#f0f0f0">iPhone_Raik</text></svg>
<svg class="a" style="left:0;top:0;overflow:visible" width="1" height="1"><text x="1165" y="603.9" textLength="101.5" lengthAdjust="spacingAndGlyphs" font-family="Liberation Sans" font-size="15" fill="#f0f0f0">Левенець Ми...</text></svg>
<svg class="a" style="left:0;top:0;overflow:visible" width="1" height="1"><text x="1038.2" y="674.9" textLength="101.0" lengthAdjust="spacingAndGlyphs" font-family="Liberation Sans" font-size="15" fill="#f0f0f0">Lana Dmytras...</text></svg>
<!-- LABELS -->
<div class="a" style="left:1057px;top:170px;width:72px;height:16px;background:rgba(14,14,14,0.72);border-radius:3px"></div><svg class="a" style="left:0;top:0;overflow:visible" width="1" height="1"><text x="1059" y="181.6" textLength="68.0" lengthAdjust="spacingAndGlyphs" font-family="Liberation Sans" font-size="9.6" fill="#f2f2f2" font-weight="500">Марія ПОПОВА</text></svg>
<div class="a" style="left:1057px;top:278px;width:97px;height:15px;background:rgba(14,14,14,0.72);border-radius:3px"></div><svg class="a" style="left:0;top:0;overflow:visible" width="1" height="1"><text x="1059" y="289.1" textLength="93.0" lengthAdjust="spacingAndGlyphs" font-family="Liberation Sans" font-size="9.6" fill="#f2f2f2" font-weight="500">Світлана Михайлівна</text></svg>
<div class="a" style="left:1058px;top:385px;width:74px;height:16px;background:rgba(14,14,14,0.72);border-radius:3px"></div><svg class="a" style="left:0;top:0;overflow:visible" width="1" height="1"><text x="1059" y="396.6" textLength="71.0" lengthAdjust="spacingAndGlyphs" font-family="Liberation Sans" font-size="9.6" fill="#f2f2f2" font-weight="500">Andrii Chornobai</text></svg>
<div class="a" style="left:1028px;top:477px;width:69px;height:14px;background:rgba(14,14,14,0.72);border-radius:3px"></div><svg class="a" style="left:1029.3px;top:479px" width="10" height="11" viewBox="0 0 10 12"><path d="M3.5,1.5 a2,2 0 0 1 4,0 v4 a2,2 0 0 1 -4,0z" fill="#e02a2a"/><path d="M2,5 a3.5,3.5 0 0 0 7,0 M5.5,9 v2 M3.5,11 h4" stroke="#e02a2a" stroke-width="1.1" fill="none"/><path d="M1,11 L9.5,1" stroke="#e02a2a" stroke-width="1.3"/></svg><svg class="a" style="left:0;top:0;overflow:visible" width="1" height="1"><text x="1040.3" y="487.6" textLength="54.4" lengthAdjust="spacingAndGlyphs" font-family="Liberation Sans" font-size="9.6" fill="#f2f2f2" font-weight="500">Inna Pronoza</text></svg>
<div class="a" style="left:1155px;top:477px;width:68px;height:14px;background:rgba(14,14,14,0.72);border-radius:3px"></div><svg class="a" style="left:1156.8px;top:479px" width="10" height="11" viewBox="0 0 10 12"><path d="M3.5,1.5 a2,2 0 0 1 4,0 v4 a2,2 0 0 1 -4,0z" fill="#e02a2a"/><path d="M2,5 a3.5,3.5 0 0 0 7,0 M5.5,9 v2 M3.5,11 h4" stroke="#e02a2a" stroke-width="1.1" fill="none"/><path d="M1,11 L9.5,1" stroke="#e02a2a" stroke-width="1.3"/></svg><svg class="a" style="left:0;top:0;overflow:visible" width="1" height="1"><text x="1167.8" y="487.6" textLength="53.2" lengthAdjust="spacingAndGlyphs" font-family="Liberation Sans" font-size="9.6" fill="#f2f2f2" font-weight="500">Анастасія А.</text></svg>
<div class="a" style="left:1027px;top:547px;width:83px;height:14px;background:rgba(14,14,14,0.72);border-radius:3px"></div><svg class="a" style="left:0;top:0;overflow:visible" width="1" height="1"><text x="1029" y="557.6" textLength="79.0" lengthAdjust="spacingAndGlyphs" font-family="Liberation Sans" font-size="9.6" fill="#f2f2f2" font-weight="500">Татьяна Каменчук</text></svg>
<div class="a" style="left:1155px;top:547px;width:85px;height:14px;background:rgba(14,14,14,0.72);border-radius:3px"></div><svg class="a" style="left:1156.8px;top:549px" width="10" height="11" viewBox="0 0 10 12"><path d="M3.5,1.5 a2,2 0 0 1 4,0 v4 a2,2 0 0 1 -4,0z" fill="#e02a2a"/><path d="M2,5 a3.5,3.5 0 0 0 7,0 M5.5,9 v2 M3.5,11 h4" stroke="#e02a2a" stroke-width="1.1" fill="none"/><path d="M1,11 L9.5,1" stroke="#e02a2a" stroke-width="1.3"/></svg><svg class="a" style="left:0;top:0;overflow:visible" width="1" height="1"><text x="1167.8" y="557.6" textLength="70.4" lengthAdjust="spacingAndGlyphs" font-family="Liberation Sans" font-size="9.6" fill="#f2f2f2" font-weight="500">Гедікова Наталя</text></svg>
<div class="a" style="left:1028px;top:618px;width:66px;height:14px;background:rgba(14,14,14,0.72);border-radius:3px"></div><svg class="a" style="left:1029.3px;top:620px" width="10" height="11" viewBox="0 0 10 12"><path d="M3.5,1.5 a2,2 0 0 1 4,0 v4 a2,2 0 0 1 -4,0z" fill="#e02a2a"/><path d="M2,5 a3.5,3.5 0 0 0 7,0 M5.5,9 v2 M3.5,11 h4" stroke="#e02a2a" stroke-width="1.1" fill="none"/><path d="M1,11 L9.5,1" stroke="#e02a2a" stroke-width="1.3"/></svg><svg class="a" style="left:0;top:0;overflow:visible" width="1" height="1"><text x="1040.3" y="628.6" textLength="51.7" lengthAdjust="spacingAndGlyphs" font-family="Liberation Sans" font-size="9.6" fill="#f2f2f2" font-weight="500">iPhone_Raik</text></svg>
<div class="a" style="left:1155px;top:618px;width:98px;height:14px;background:rgba(14,14,14,0.72);border-radius:3px"></div><svg class="a" style="left:1156.8px;top:620px" width="10" height="11" viewBox="0 0 10 12"><path d="M3.5,1.5 a2,2 0 0 1 4,0 v4 a2,2 0 0 1 -4,0z" fill="#e02a2a"/><path d="M2,5 a3.5,3.5 0 0 0 7,0 M5.5,9 v2 M3.5,11 h4" stroke="#e02a2a" stroke-width="1.1" fill="none"/><path d="M1,11 L9.5,1" stroke="#e02a2a" stroke-width="1.3"/></svg><svg class="a" style="left:0;top:0;overflow:visible" width="1" height="1"><text x="1167.8" y="628.6" textLength="83.2" lengthAdjust="spacingAndGlyphs" font-family="Liberation Sans" font-size="9.6" fill="#f2f2f2" font-weight="500">Левенець Михайло</text></svg>
<div class="a" style="left:1028px;top:689px;width:87px;height:14px;background:rgba(14,14,14,0.72);border-radius:3px"></div><svg class="a" style="left:1029.3px;top:691px" width="10" height="11" viewBox="0 0 10 12"><path d="M3.5,1.5 a2,2 0 0 1 4,0 v4 a2,2 0 0 1 -4,0z" fill="#e02a2a"/><path d="M2,5 a3.5,3.5 0 0 0 7,0 M5.5,9 v2 M3.5,11 h4" stroke="#e02a2a" stroke-width="1.1" fill="none"/><path d="M1,11 L9.5,1" stroke="#e02a2a" stroke-width="1.3"/></svg><svg class="a" style="left:0;top:0;overflow:visible" width="1" height="1"><text x="1040.3" y="699.6" textLength="73.0" lengthAdjust="spacingAndGlyphs" font-family="Liberation Sans" font-size="9.6" fill="#f2f2f2" font-weight="500">Lana Dmytrashko</text></svg>
<div class="a" style="left:1155px;top:689px;width:97px;height:14px;background:rgba(14,14,14,0.72);border-radius:3px"></div><svg class="a" style="left:1156.8px;top:691px" width="10" height="11" viewBox="0 0 10 12"><path d="M3.5,1.5 a2,2 0 0 1 4,0 v4 a2,2 0 0 1 -4,0z" fill="#e02a2a"/><path d="M2,5 a3.5,3.5 0 0 0 7,0 M5.5,9 v2 M3.5,11 h4" stroke="#e02a2a" stroke-width="1.1" fill="none"/><path d="M1,11 L9.5,1" stroke="#e02a2a" stroke-width="1.3"/></svg><svg class="a" style="left:0;top:0;overflow:visible" width="1" height="1"><text x="1167.8" y="699.6" textLength="82.2" lengthAdjust="spacingAndGlyphs" font-family="Liberation Sans" font-size="9.6" fill="#f2f2f2" font-weight="500">Буковський Сергій</text></svg>
<!-- DOCK -->
<div class="a" style="left:180px;top:759px;width:920px;height:66px;border-radius:18px;background:rgba(228,228,228,0.96);box-shadow:inset 0 0 0 1px rgba(255,255,255,0.5)"></div>
<!-- finder -->
<div class="a" style="left:188px;top:768px;width:44px;height:44px;border-radius:10px;overflow:hidden;background:linear-gradient(180deg,#f4f4f6,#dfe3ea)">
  <svg class="a" style="left:0;top:0" width="44" height="44" viewBox="0 0 44 44"><defs><linearGradient id="fb" x1="0" y1="0" x2="0" y2="1"><stop offset="0" stop-color="#1fc0f8"/><stop offset="1" stop-color="#1a78f0"/></linearGradient></defs><path d="M0,0 H24 C20,10 17,20 16,28 H22 C22,34 22,40 23,44 H0 Z" fill="url(#fb)"/><path d="M10,10 v5 M33,10 v5" stroke="#1d2c4a" stroke-width="2.2" stroke-linecap="round"/><path d="M9,30 C16,37 28,37 35,30" stroke="#1d2c4a" stroke-width="1.8" fill="none" stroke-linecap="round"/></svg>
</div>
<!-- launchpad -->
<div class="a" style="left:247px;top:768px;width:43px;height:44px;border-radius:10px;background:#f3f3f5">
  <svg class="a" style="left:0;top:0" width="43" height="44" viewBox="0 0 43 44">
   <rect x="9" y="10" width="7.5" height="7.5" rx="2" fill="#3ccf3c"/><rect x="18.5" y="10" width="7.5" height="7.5" rx="2" fill="#f8c21a"/><rect x="28" y="10" width="7.5" height="7.5" rx="2" fill="#f88a1a"/>
   <rect x="9" y="19.5" width="7.5" height="7.5" rx="2" fill="#e82a2a"/><rect x="18.5" y="19.5" width="7.5" height="7.5" rx="2" fill="#9aa0a0"/><rect x="28" y="19.5" width="7.5" height="7.5" rx="2" fill="#f04a6a"/>
   <rect x="9" y="29" width="7.5" height="7.5" rx="2" fill="#a050e0"/><rect x="18.5" y="29" width="7.5" height="7.5" rx="2" fill="#1aa0f0"/><rect x="28" y="29" width="7.5" height="7.5" rx="2" fill="#2ad0a0"/>
  </svg>
</div>
<!-- photos -->
<div class="a" style="left:304px;top:768px;width:44px;height:44px;border-radius:10px;background:#fbfbfb">
  <svg class="a" style="left:0;top:0" width="44" height="44" viewBox="0 0 44 44">
   <g transform="translate(22,22)" opacity="0.85">
    <ellipse rx="5" ry="9" cy="-8" fill="#f8b418"/>
    <ellipse rx="5" ry="9" cy="-8" fill="#bcd83c" transform="rotate(45)"/>
    <ellipse rx="5" ry="9" cy="-8" fill="#5cc86a" transform="rotate(90)"/>
    <ellipse rx="5" ry="9" cy="-8" fill="#3aa8d8" transform="rotate(135)"/>
    <ellipse rx="5" ry="9" cy="-8" fill="#6a7ad8" transform="rotate(180)"/>
    <ellipse rx="5" ry="9" cy="-8" fill="#a86ac8" transform="rotate(225)"/>
    <ellipse rx="5" ry="9" cy="-8" fill="#e8506a" transform="rotate(270)"/>
    <ellipse rx="5" ry="9" cy="-8" fill="#f87a2a" transform="rotate(315)"/>
   </g>
  </svg>
</div>
<!-- app store -->
<div class="a" style="left:361px;top:768px;width:44px;height:44px;border-radius:10px;background:linear-gradient(180deg,#1ab2f8,#1a6ef0)">
  <svg class="a" style="left:0;top:0" width="44" height="44" viewBox="0 0 44 44" stroke="#fff" stroke-width="3" stroke-linecap="round" fill="none"><path d="M25,9 L13,30 M19,9 L31,30 M10,26 H34"/><path d="M10,34 l2,-3 M34,34 l-2,-3"/></svg>
</div>
<!-- settings -->
<div class="a" style="left:419px;top:768px;width:44px;height:44px;border-radius:10px;background:linear-gradient(180deg,#b8b8bc,#8a8a90)">
  <svg class="a" style="left:0;top:0" width="44" height="44" viewBox="0 0 44 44"><circle cx="22" cy="22" r="17" fill="#3c3c40"/><circle cx="22" cy="22" r="14" fill="#7a7a80"/><circle cx="22" cy="22" r="11" fill="#4a4a50"/><circle cx="22" cy="22" r="4" fill="#a0a0a6"/><path d="M22,22 V11 M22,22 L12.5,27.5 M22,22 L31.5,27.5" stroke="#a0a0a6" stroke-width="2.5"/></svg>
</div>
<div class="a" style="left:449px;top:763px;width:19px;height:19px;border-radius:50%;background:#f0382e;color:#fff;font-size:11px;text-align:center;line-height:19px">1</div>
<!-- music -->
<div class="a" style="left:477px;top:768px;width:44px;height:44px;border-radius:10px;background:linear-gradient(180deg,#fa5a6a,#f0283e)">
  <svg class="a" style="left:0;top:0" width="44" height="44" viewBox="0 0 44 44" fill="#fff"><path d="M17,13 L31,10 V28 a4,3.5 0 1 1 -2.5,-3.2 V15.5 L19.5,17.5 V31 a4,3.5 0 1 1 -2.5,-3.2 Z"/></svg>
</div>
<!-- figma -->
<div class="a" style="left:534px;top:768px;width:44px;height:44px;border-radius:10px;background:#1e1e1e">
  <svg class="a" style="left:0;top:0" width="44" height="44" viewBox="0 0 44 44"><path d="M15,9 h7 v8 h-7 a4,4 0 0 1 0,-8z" fill="#f24e1e"/><path d="M22,9 h6 a4,4 0 0 1 0,8 h-6z" fill="#ff7262"/><path d="M15,17 h7 v8 h-7 a4,4 0 0 1 0,-8z" fill="#a259ff"/><circle cx="28" cy="21" r="4" fill="#1abcfe"/><path d="M15,25 h7 v4 a4,4 0 1 1 -7,-4z" fill="#0acf83"/></svg>
</div>
<div class="a" style="left:598px;top:767px;width:1px;height:48px;background:#c4c4c4"></div>
<!-- chrome -->
<div class="a" style="left:618px;top:768px;width:44px;height:44px;border-radius:10px;background:#fafafa">
  <svg class="a" style="left:0;top:0" width="44" height="44" viewBox="0 0 44 44"><circle cx="22" cy="22" r="17" fill="#e33b2e"/><path d="M22,22 L7.3,30.5 A17,17 0 0 1 22,5 Z" fill="#e33b2e"/><path d="M22,22 L36.7,30.5 A17,17 0 0 1 22,39 A17,17 0 0 1 7.3,30.5 Z" fill="#34a853" transform="rotate(0)"/><path d="M22,22 L22,39 A17,17 0 0 0 36.7,30.5 L39,22 A17,17 0 0 0 36.7,13.5Z" fill="#fbbc04"/><circle cx="22" cy="22" r="8" fill="#fff"/><circle cx="22" cy="22" r="6.3" fill="#1a73e8"/></svg>
</div>
<!-- word -->
<div class="a" style="left:676px;top:768px;width:44px;height:44px;border-radius:10px;background:#fafafa">
  <svg class="a" style="left:0;top:0" width="44" height="44" viewBox="0 0 44 44"><rect x="14" y="8" width="23" height="28" rx="2" fill="#2b7cd3"/><rect x="14" y="15" width="23" height="7" fill="#185abd"/><rect x="14" y="22" width="23" height="7" fill="#103f91"/><rect x="14" y="29" width="23" height="7" rx="1" fill="#0a2d6e"/><rect x="7" y="14" width="16" height="16" rx="2" fill="#185abd"/><text x="15" y="27" font-family="Liberation Sans" font-weight="bold" font-size="12" fill="#fff" text-anchor="middle">W</text></svg>
</div>
<!-- telegram -->
<div class="a" style="left:734px;top:768px;width:44px;height:44px;border-radius:10px;background:#ececec">
  <svg class="a" style="left:0;top:0" width="44" height="44" viewBox="0 0 44 44"><defs><linearGradient id="tg" x1="0" y1="0" x2="0" y2="1"><stop offset="0" stop-color="#3ab0ea"/><stop offset="1" stop-color="#1e96d4"/></linearGradient></defs><circle cx="22" cy="22" r="17.5" fill="url(#tg)"/><path d="M11.5,21.5 L30,14 C31,13.6 31.8,14.2 31.5,15.5 L28.5,29.5 C28.2,30.6 27.5,30.8 26.6,30.3 L21.5,26.5 L19,29 C18.7,29.3 18.4,29.4 18,29.4 L18.4,24.3 L27.5,16.2 C27.9,15.8 27.4,15.6 26.9,16 L15.6,23.1 L11.5,21.8 C10.6,21.5 10.6,21.9 11.5,21.5Z" fill="#fff"/></svg>
</div>
<!-- zoom -->
<div class="a" style="left:791px;top:768px;width:45px;height:44px;border-radius:10px;background:linear-gradient(180deg,#2a7cf8,#0b5cff)">
  <div class="a" style="left:0;top:15px;width:45px;text-align:center;color:#fff;font-size:12.5px;font-weight:bold;letter-spacing:-0.3px">zoom</div>
</div>
<div class="a" style="left:855px;top:767px;width:1px;height:48px;background:#c4c4c4"></div>
<!-- doc thumbs -->
<div class="a" style="left:870px;top:765px;width:51px;height:50px;background:#fdfdfd;box-shadow:0 0 1px #bbb">
  <div class="a" style="left:8px;top:10px;width:34px;height:28px;background:repeating-linear-gradient(180deg,#8a8a8a 0 1px,transparent 1px 3px);opacity:.55"></div>
  <div class="a" style="left:35px;top:34px;width:14px;height:14px;border-radius:3px;background:#1e62c8"></div>
  <div class="a" style="left:37px;top:36px;font-size:8px;font-weight:bold;color:#fff">W</div>
</div>
<div class="a" style="left:930px;top:765px;width:47px;height:50px;background:#f8f8f6;box-shadow:0 0 1px #bbb">
  <div class="a" style="left:7px;top:12px;width:33px;height:24px;background:repeating-linear-gradient(180deg,#8a8a8a 0 1px,transparent 1px 3px);opacity:.45"></div>
  <div class="a" style="left:31px;top:34px;width:14px;height:14px;border-radius:3px;background:#1e62c8"></div>
  <div class="a" style="left:33px;top:36px;font-size:8px;font-weight:bold;color:#fff">W</div>
</div>
<div class="a" style="left:988px;top:765px;width:47px;height:50px;background:#1f2833;overflow:hidden">
  <div class="a" style="left:20px;top:5px;width:25px;height:38px;background:repeating-linear-gradient(180deg,#6f8db0 0 4px,#3f5570 4px 6px)"></div>
  <div class="a" style="left:2px;top:10px;width:14px;height:6px;background:#5a6f8a"></div>
  <div class="a" style="left:31px;top:35px;width:15px;height:15px;border-radius:50%;background:#2aa2e0;border:1.5px solid #fff"></div>
</div>
<!-- trash -->
<div class="a" style="left:1051px;top:767px;width:38px;height:46px;border-radius:3px 3px 8px 8px;background:linear-gradient(90deg,#e6e6e8,#f7f7f8 40%,#dcdcde);clip-path:polygon(0 0,100% 0,92% 100%,8% 100%)"></div>
<div class="a" style="left:1051px;top:767px;width:38px;height:5px;border-radius:50%;background:#d0d0d2"></div>
<!-- dots -->
<div class="a" style="left:209px;top:820px;width:3px;height:3px;border-radius:50%;background:#333;box-shadow:429px 0 0 #333,487px 0 0 #333,545px 0 0 #333,602px 0 0 #333"></div>

<!--/PARTS-->
</div></div></div></div><!--/THUMB-->
</body></html>
